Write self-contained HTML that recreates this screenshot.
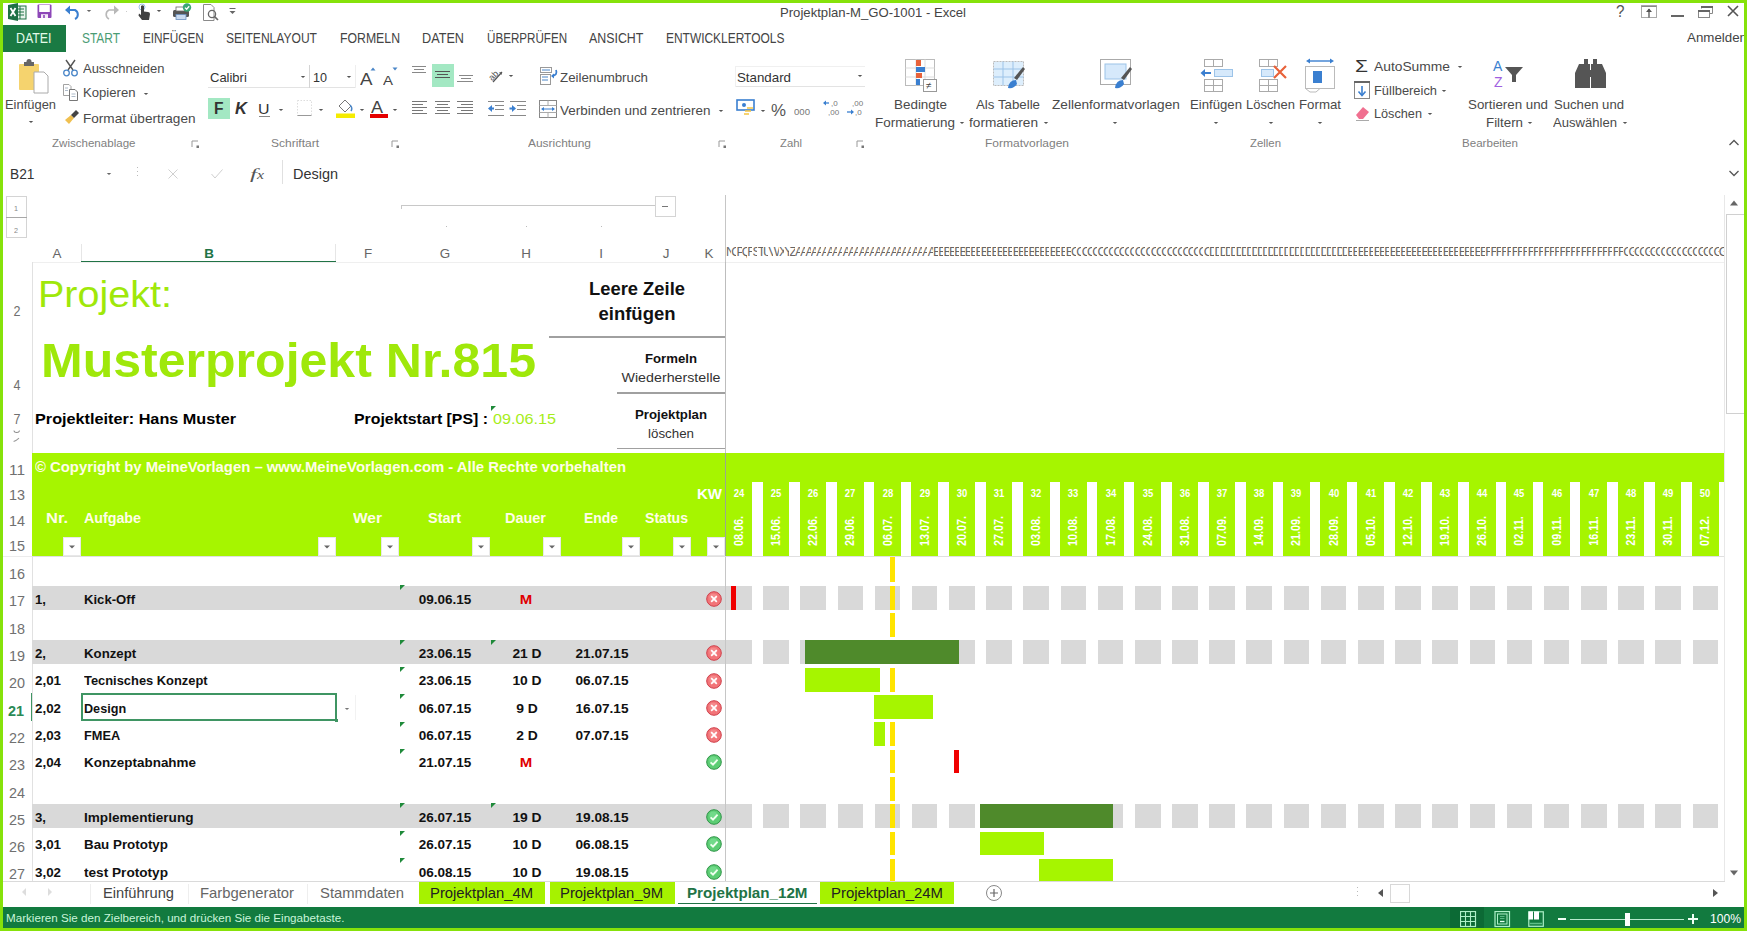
<!DOCTYPE html><html><head><meta charset="utf-8"><style>
html,body{margin:0;padding:0;}
body{width:1747px;height:931px;position:relative;overflow:hidden;background:#86e20a;font-family:"Liberation Sans",sans-serif;}
</style></head><body>
<div style="position:absolute;left:3px;top:3px;width:1741px;height:925px;background:#fff;"></div>
<svg style="position:absolute;left:7px;top:3px;" width="20" height="18" viewBox="0 0 20 18"><rect x="8" y="3" width="11" height="13" fill="#e8f3ec" stroke="#1e7145" stroke-width="1"/><path d="M10 6h7M10 9h7M10 12h7M13 3v13" stroke="#1e7145" stroke-width="1"/><path d="M1 2 L11 0 L11 18 L1 16 Z" fill="#1e7145"/><path d="M3.5 5 L8.5 13 M8.5 5 L3.5 13" stroke="#fff" stroke-width="1.8"/></svg>
<svg style="position:absolute;left:37px;top:4px;" width="15" height="15" viewBox="0 0 15 15"><rect x="0.5" y="0.5" width="14" height="13.5" rx="1" fill="#8d47b8"/><rect x="2.2" y="1" width="10.6" height="7" fill="#fff"/><rect x="4" y="10.2" width="7" height="3.8" fill="#f4ecf8"/><rect x="6.2" y="11" width="1.6" height="3" fill="#8d47b8"/></svg>
<svg style="position:absolute;left:64px;top:4px;" width="18" height="16" viewBox="0 0 18 16"><path d="M4 6 H11 A5 5 0 0 1 11 15" fill="none" stroke="#3a7fd0" stroke-width="2"/><path d="M1 6 L6 1.5 L6 10.5 Z" fill="#3a7fd0"/></svg>
<svg style="position:absolute;left:84.5px;top:8px;" width="8" height="6" viewBox="0 0 8 6"><path d="M1.7999999999999998 1.9 L6.2 1.9 L4 4.1 Z" fill="#666"/></svg>
<svg style="position:absolute;left:102px;top:4px;" width="18" height="16" viewBox="0 0 18 16"><path d="M14 6 H7 A5 5 0 0 0 7 15" fill="none" stroke="#b8b8b8" stroke-width="1.6"/><path d="M17 6 L12 1.5 L12 10.5 Z" fill="#b8b8b8"/></svg>
<div style="position:absolute;left:125.5px;top:10.5px;width:1.0px;height:1.0px;background:#ccc;"></div>
<svg style="position:absolute;left:136px;top:3px;" width="16" height="18" viewBox="0 0 16 18"><circle cx="6" cy="4" r="3" fill="none" stroke="#9ec2e8" stroke-width="1"/><path d="M5 3 V12 L3 10.5 L2.5 12.5 L6 17 H13 L14 11 Q14 9 12 9 L8 8.5 V3 Q6.5 1.5 5 3Z" fill="#404040"/></svg>
<svg style="position:absolute;left:154.5px;top:8px;" width="8" height="6" viewBox="0 0 8 6"><path d="M1.7999999999999998 1.9 L6.2 1.9 L4 4.1 Z" fill="#555"/></svg>
<svg style="position:absolute;left:172px;top:3px;" width="20" height="17" viewBox="0 0 20 17"><rect x="1" y="7" width="16" height="7" rx="1.5" fill="#555"/><rect x="4" y="4" width="9" height="4" fill="#fff" stroke="#666" stroke-width="0.8"/><rect x="4" y="11.5" width="10" height="5" fill="#c9daf0" stroke="#6a8fbf" stroke-width="0.8"/><circle cx="15" cy="4.5" r="4.2" fill="#3aa676"/><path d="M13 4.6 L14.6 6.2 L17.2 3.2" fill="none" stroke="#fff" stroke-width="1.3"/></svg>
<svg style="position:absolute;left:202px;top:2px;" width="18" height="19" viewBox="0 0 18 19"><path d="M1.5 2.5 H9 L12 5.5 V18.5 H1.5 Z" fill="#fff" stroke="#8a8a8a" stroke-width="1"/><circle cx="10" cy="12" r="3.6" fill="none" stroke="#666" stroke-width="1.3"/><path d="M12.6 14.6 L16 18" stroke="#666" stroke-width="1.6"/></svg>
<svg style="position:absolute;left:228px;top:7px;" width="9" height="9" viewBox="0 0 9 9"><rect x="1.5" y="1" width="6" height="1" fill="#666"/><path d="M1.5 4 H7.5 L4.5 7 Z" fill="#666"/></svg>
<span id="t1" style="position:absolute;left:780.00px;top:6.13px;font:400 13px/14.94px 'Liberation Sans', sans-serif;color:#444;white-space:nowrap;transform:scaleX(1.0095);transform-origin:left 0;">Projektplan-M_GO-1001 - Excel</span>
<span id="t2" style="position:absolute;left:1616.00px;top:2.00px;font:400 16.5px/18.96px 'Liberation Sans', sans-serif;color:#555;white-space:nowrap;transform:scaleX(0.9252);transform-origin:left 0;">?</span>
<svg style="position:absolute;left:1640px;top:4px;" width="20" height="16" viewBox="0 0 20 16"><rect x="1.5" y="1.5" width="15" height="12" fill="none" stroke="#aaa" stroke-width="1"/><path d="M1.5 2.5 H16.5" stroke="#888" stroke-width="1"/><path d="M9 5 V13.5" stroke="#555" stroke-width="1.3"/><path d="M6 8 L9 4.5 L12 8Z" fill="#555"/></svg>
<div style="position:absolute;left:1671px;top:14.5px;width:12.5px;height:2.0px;background:#666;"></div>
<svg style="position:absolute;left:1697px;top:3px;" width="18" height="16" viewBox="0 0 18 16"><rect x="1.5" y="7.5" width="11" height="7" fill="none" stroke="#888" stroke-width="1"/><rect x="1" y="7" width="12" height="2" fill="#666"/><path d="M4.5 5.5 V3.5 H15.5 V10.5 H13" fill="none" stroke="#888" stroke-width="1"/><rect x="4" y="3" width="12" height="2" fill="#666"/></svg>
<svg style="position:absolute;left:1726px;top:4px;" width="14" height="14" viewBox="0 0 14 14"><path d="M2 2 L12 12 M12 2 L2 12" stroke="#555" stroke-width="1.6"/></svg>
<span id="t3" style="position:absolute;left:1687.00px;top:31.11px;font:400 12.8px/14.71px 'Liberation Sans', sans-serif;color:#444;white-space:nowrap;transform:scaleX(1.0412);transform-origin:left 0;">Anmelden</span>
<div style="position:absolute;left:3px;top:25px;width:63.3px;height:26.5px;background:#1a7a43;"></div>
<span id="t4" style="position:absolute;left:15.50px;top:30.33px;font:400 14.3px/16.43px 'Liberation Sans', sans-serif;color:#e3fbe9;white-space:nowrap;transform:scaleX(0.8649);transform-origin:left 0;">DATEI</span>
<span id="t5" style="position:absolute;left:81.50px;top:30.33px;font:400 14.3px/16.43px 'Liberation Sans', sans-serif;color:#4a9c74;white-space:nowrap;transform:scaleX(0.8343);transform-origin:left 0;">START</span>
<span id="t6" style="position:absolute;left:142.70px;top:30.33px;font:400 14.3px/16.43px 'Liberation Sans', sans-serif;color:#444;white-space:nowrap;transform:scaleX(0.8230);transform-origin:left 0;">EINFÜGEN</span>
<span id="t7" style="position:absolute;left:226.00px;top:30.33px;font:400 14.3px/16.43px 'Liberation Sans', sans-serif;color:#444;white-space:nowrap;transform:scaleX(0.8443);transform-origin:left 0;">SEITENLAYOUT</span>
<span id="t8" style="position:absolute;left:340.00px;top:30.33px;font:400 14.3px/16.43px 'Liberation Sans', sans-serif;color:#444;white-space:nowrap;transform:scaleX(0.8583);transform-origin:left 0;">FORMELN</span>
<span id="t9" style="position:absolute;left:422.00px;top:30.33px;font:400 14.3px/16.43px 'Liberation Sans', sans-serif;color:#444;white-space:nowrap;transform:scaleX(0.8860);transform-origin:left 0;">DATEN</span>
<span id="t10" style="position:absolute;left:486.70px;top:30.33px;font:400 14.3px/16.43px 'Liberation Sans', sans-serif;color:#444;white-space:nowrap;transform:scaleX(0.8131);transform-origin:left 0;">ÜBERPRÜFEN</span>
<span id="t11" style="position:absolute;left:589.20px;top:30.33px;font:400 14.3px/16.43px 'Liberation Sans', sans-serif;color:#444;white-space:nowrap;transform:scaleX(0.8667);transform-origin:left 0;">ANSICHT</span>
<span id="t12" style="position:absolute;left:666.30px;top:30.33px;font:400 14.3px/16.43px 'Liberation Sans', sans-serif;color:#444;white-space:nowrap;transform:scaleX(0.8356);transform-origin:left 0;">ENTWICKLERTOOLS</span>
<svg style="position:absolute;left:17px;top:58px;" width="34" height="37" viewBox="0 0 34 37"><rect x="2" y="6" width="20" height="26" rx="1" fill="#f5d36e"/><path d="M7 4 H17 V8 H7 Z" fill="#666"/><circle cx="12" cy="3.5" r="2.5" fill="#666"/><path d="M17 14 H27 L31 18 V35 H17 Z" fill="#fff" stroke="#aaa" stroke-width="1"/></svg>
<span id="t13" style="position:absolute;left:5.40px;top:98.20px;font:400 12.6px/14.48px 'Liberation Sans', sans-serif;color:#4a4a4a;white-space:nowrap;transform:scaleX(1.0258);transform-origin:left 0;">Einfügen</span>
<svg style="position:absolute;left:27px;top:119px;" width="8" height="6" viewBox="0 0 8 6"><path d="M1.7999999999999998 1.9 L6.2 1.9 L4 4.1 Z" fill="#555"/></svg>
<svg style="position:absolute;left:62px;top:59px;" width="17" height="18" viewBox="0 0 17 18"><path d="M4 1 L11 11 M13 1 L6 11" stroke="#555" stroke-width="1.4"/><circle cx="4.5" cy="14" r="2.8" fill="none" stroke="#4a86c8" stroke-width="1.3"/><circle cx="12.5" cy="14" r="2.8" fill="none" stroke="#4a86c8" stroke-width="1.3"/></svg>
<span id="t14" style="position:absolute;left:82.60px;top:61.73px;font:400 13px/14.94px 'Liberation Sans', sans-serif;color:#4a4a4a;white-space:nowrap;transform:scaleX(0.9979);transform-origin:left 0;">Ausschneiden</span>
<svg style="position:absolute;left:62px;top:83px;" width="17" height="19" viewBox="0 0 17 19"><path d="M1.5 1.5 H7 L9 3.5 V12.5 H1.5 Z" fill="#fff" stroke="#999" stroke-width="0.9"/><path d="M7.5 6.5 H13 L15.5 9 V17.5 H7.5 Z" fill="#fff" stroke="#777" stroke-width="1"/><path d="M9.5 11h4M9.5 13.5h4M3 5h3M3 7.5h3" stroke="#9ab" stroke-width="0.8"/></svg>
<span id="t15" style="position:absolute;left:82.60px;top:86.43px;font:400 13px/14.94px 'Liberation Sans', sans-serif;color:#4a4a4a;white-space:nowrap;transform:scaleX(1.0087);transform-origin:left 0;">Kopieren</span>
<svg style="position:absolute;left:141.5px;top:90.5px;" width="8" height="6" viewBox="0 0 8 6"><path d="M1.7999999999999998 1.9 L6.2 1.9 L4 4.1 Z" fill="#555"/></svg>
<svg style="position:absolute;left:63px;top:108px;" width="17" height="18" viewBox="0 0 17 18"><path d="M2 12 L8 7 L11 10 L6 16 Z" fill="#f0c050"/><path d="M8 7 L13 2 L16 5 L11 10 Z" fill="#444"/></svg>
<span id="t16" style="position:absolute;left:82.60px;top:111.63px;font:400 13px/14.94px 'Liberation Sans', sans-serif;color:#4a4a4a;white-space:nowrap;transform:scaleX(1.0448);transform-origin:left 0;">Format übertragen</span>
<span id="t17" style="position:absolute;left:51.50px;top:138.21px;font:400 10.3px/11.83px 'Liberation Sans', sans-serif;color:#808080;white-space:nowrap;transform:scaleX(1.1220);transform-origin:left 0;">Zwischenablage</span>
<svg style="position:absolute;left:190.5px;top:139.5px;" width="9" height="9" viewBox="0 0 9 9"><path d="M1 7 V1 H7" fill="none" stroke="#999" stroke-width="1"/><rect x="5.5" y="5.5" width="2.5" height="2.5" fill="#777"/></svg>
<div style="position:absolute;left:208px;top:86.5px;width:147.5px;height:1.0px;background:#e3e3e3;"></div>
<div style="position:absolute;left:308.7px;top:65px;width:1.0px;height:22.5px;background:#d4d4d4;"></div>
<div style="position:absolute;left:354.5px;top:65px;width:1.0px;height:22.5px;background:#eeeeee;"></div>
<span id="t18" style="position:absolute;left:209.60px;top:70.93px;font:400 13px/14.94px 'Liberation Sans', sans-serif;color:#333;white-space:nowrap;transform:scaleX(0.9988);transform-origin:left 0;">Calibri</span>
<svg style="position:absolute;left:299px;top:73.5px;" width="8" height="6" viewBox="0 0 8 6"><path d="M1.7999999999999998 1.9 L6.2 1.9 L4 4.1 Z" fill="#555"/></svg>
<span id="t19" style="position:absolute;left:313.00px;top:70.93px;font:400 13px/14.94px 'Liberation Sans', sans-serif;color:#333;white-space:nowrap;transform:scaleX(0.9676);transform-origin:left 0;">10</span>
<svg style="position:absolute;left:345px;top:73.5px;" width="8" height="6" viewBox="0 0 8 6"><path d="M1.7999999999999998 1.9 L6.2 1.9 L4 4.1 Z" fill="#555"/></svg>
<span id="t20" style="position:absolute;left:359.50px;top:69.90px;font:400 16.5px/18.96px 'Liberation Sans', sans-serif;color:#444;white-space:nowrap;transform:scaleX(1.1348);transform-origin:left 0;">A</span>
<svg style="position:absolute;left:370px;top:67px;" width="6" height="4" viewBox="0 0 6 4"><path d="M0.5 3.5 L3 0.5 L5.5 3.5Z" fill="#4a86c8"/></svg>
<span id="t21" style="position:absolute;left:382.50px;top:72.67px;font:400 13.5px/15.51px 'Liberation Sans', sans-serif;color:#444;white-space:nowrap;transform:scaleX(1.1092);transform-origin:left 0;">A</span>
<svg style="position:absolute;left:392px;top:67px;" width="6" height="4" viewBox="0 0 6 4"><path d="M0.5 0.5 L3 3.5 L5.5 0.5Z" fill="#4a86c8"/></svg>
<div style="position:absolute;left:208px;top:97.8px;width:22px;height:21.7px;background:#a3e8c3;"></div>
<span id="t22" style="position:absolute;left:213.50px;top:99.96px;font:700 16px/18.38px 'Liberation Sans', sans-serif;color:#333;white-space:nowrap;transform:scaleX(0.9712);transform-origin:left 0;">F</span>
<span id="t23" style="position:absolute;left:235.00px;top:99.96px;font:700 16px/18.38px 'Liberation Sans', sans-serif;color:#333;white-space:nowrap;transform:scaleX(1.0378);transform-origin:left 0;font-style:italic;">K</span>
<span id="t24" style="position:absolute;left:258.00px;top:100.42px;font:400 15.5px/17.81px 'Liberation Sans', sans-serif;color:#333;white-space:nowrap;transform:scaleX(1.0265);transform-origin:left 0;">U</span>
<div style="position:absolute;left:259px;top:115.5px;width:11px;height:1.0px;background:#888;"></div>
<svg style="position:absolute;left:277px;top:106.5px;" width="8" height="6" viewBox="0 0 8 6"><path d="M1.7999999999999998 1.9 L6.2 1.9 L4 4.1 Z" fill="#555"/></svg>
<svg style="position:absolute;left:296px;top:99px;" width="17" height="18" viewBox="0 0 17 18"><path d="M1.5 1.5 H15.5 V16.5 H1.5 Z" fill="none" stroke="#ddd" stroke-width="1" stroke-dasharray="1.5 1.5"/><path d="M1.5 16.5 H15.5" stroke="#999" stroke-width="1"/></svg>
<svg style="position:absolute;left:317px;top:106.5px;" width="8" height="6" viewBox="0 0 8 6"><path d="M1.7999999999999998 1.9 L6.2 1.9 L4 4.1 Z" fill="#555"/></svg>
<svg style="position:absolute;left:335px;top:98px;" width="22" height="21" viewBox="0 0 22 21"><path d="M4 8 L10 2 L16 8 L10 14 Z" fill="#fff" stroke="#777" stroke-width="1"/><path d="M15 7 Q18 10 16 13" fill="none" stroke="#4a86c8" stroke-width="1.5"/><rect x="1" y="15.5" width="19" height="4.5" fill="#f5ec00"/></svg>
<svg style="position:absolute;left:358px;top:106.5px;" width="8" height="6" viewBox="0 0 8 6"><path d="M1.7999999999999998 1.9 L6.2 1.9 L4 4.1 Z" fill="#555"/></svg>
<span id="t25" style="position:absolute;left:371.00px;top:98.20px;font:400 16.5px/18.96px 'Liberation Sans', sans-serif;color:#444;white-space:nowrap;transform:scaleX(1.0894);transform-origin:left 0;">A</span>
<div style="position:absolute;left:370px;top:113.5px;width:18px;height:4.5px;background:#e50000;"></div>
<svg style="position:absolute;left:391px;top:106.5px;" width="8" height="6" viewBox="0 0 8 6"><path d="M1.7999999999999998 1.9 L6.2 1.9 L4 4.1 Z" fill="#555"/></svg>
<span id="t26" style="position:absolute;left:271.00px;top:138.21px;font:400 10.3px/11.83px 'Liberation Sans', sans-serif;color:#808080;white-space:nowrap;transform:scaleX(1.1650);transform-origin:left 0;">Schriftart</span>
<svg style="position:absolute;left:391px;top:139.5px;" width="9" height="9" viewBox="0 0 9 9"><path d="M1 7 V1 H7" fill="none" stroke="#999" stroke-width="1"/><rect x="5.5" y="5.5" width="2.5" height="2.5" fill="#777"/></svg>
<svg style="position:absolute;left:412px;top:66px;" width="15" height="8" viewBox="0 0 15 8"><rect x="0" y="0" width="14" height="1" fill="#888"/><rect x="2" y="3" width="10" height="1" fill="#888"/><rect x="0" y="6" width="14" height="1" fill="#888"/></svg>
<div style="position:absolute;left:431.5px;top:64.2px;width:22.0px;height:22.5px;background:#a3e8c3;"></div>
<svg style="position:absolute;left:435px;top:71px;" width="16" height="8" viewBox="0 0 16 8"><rect x="0" y="0" width="15" height="1" fill="#555"/><rect x="2" y="3" width="11" height="1" fill="#555"/><rect x="0" y="6" width="15" height="1" fill="#555"/></svg>
<svg style="position:absolute;left:457px;top:75px;" width="17" height="8" viewBox="0 0 17 8"><rect x="2" y="0" width="14" height="1" fill="#888"/><rect x="4" y="3" width="10" height="1" fill="#888"/><rect x="0" y="6" width="16" height="1" fill="#888"/></svg>
<svg style="position:absolute;left:487px;top:66px;" width="18" height="18" viewBox="0 0 18 18"><text x="1" y="12" font-family="Liberation Sans" font-size="9" fill="#555" transform="rotate(-45 7 9)">ab</text><path d="M6 16 L15 6" stroke="#555" stroke-width="1.2"/><path d="M15 6 L12 6.5 L14.5 9Z" fill="#555"/></svg>
<svg style="position:absolute;left:506.5px;top:73px;" width="8" height="6" viewBox="0 0 8 6"><path d="M1.7999999999999998 1.9 L6.2 1.9 L4 4.1 Z" fill="#555"/></svg>
<svg style="position:absolute;left:539px;top:66px;" width="20" height="20" viewBox="0 0 20 20"><rect x="1.5" y="1.5" width="11" height="5" fill="none" stroke="#999" stroke-width="1"/><rect x="1.5" y="8.5" width="10" height="10" fill="none" stroke="#999" stroke-width="1"/><path d="M3 4h8M3 11h6M3 14h6" stroke="#4a86c8" stroke-width="1"/><path d="M17 4 Q19 9 13 10" fill="none" stroke="#3a7fd0" stroke-width="1.8"/><path d="M12 10 L15 7.5 L15 12.5Z" fill="#3a7fd0"/></svg>
<span id="t27" style="position:absolute;left:560.00px;top:70.93px;font:400 13px/14.94px 'Liberation Sans', sans-serif;color:#4a4a4a;white-space:nowrap;transform:scaleX(1.0233);transform-origin:left 0;">Zeilenumbruch</span>
<svg style="position:absolute;left:412px;top:101px;" width="16" height="14" viewBox="0 0 16 14"><rect x="0" y="0" width="15" height="1" fill="#777"/><rect x="0" y="3" width="11" height="1" fill="#777"/><rect x="0" y="6" width="15" height="1" fill="#777"/><rect x="0" y="9" width="11" height="1" fill="#777"/><rect x="0" y="12" width="15" height="1" fill="#777"/></svg>
<svg style="position:absolute;left:435px;top:101px;" width="16" height="14" viewBox="0 0 16 14"><rect x="0" y="0" width="15" height="1" fill="#777"/><rect x="2" y="3" width="11" height="1" fill="#777"/><rect x="0" y="6" width="15" height="1" fill="#777"/><rect x="2" y="9" width="11" height="1" fill="#777"/><rect x="0" y="12" width="15" height="1" fill="#777"/></svg>
<svg style="position:absolute;left:457px;top:101px;" width="17" height="14" viewBox="0 0 17 14"><rect x="0" y="0" width="16" height="1" fill="#777"/><rect x="4" y="3" width="12" height="1" fill="#777"/><rect x="0" y="6" width="16" height="1" fill="#777"/><rect x="4" y="9" width="12" height="1" fill="#777"/><rect x="0" y="12" width="16" height="1" fill="#777"/></svg>
<svg style="position:absolute;left:487px;top:100px;" width="18" height="17" viewBox="0 0 18 17"><path d="M1 1.5h16M8 5.5h9M8 9.5h9M1 15.5h16" stroke="#888" stroke-width="1"/><path d="M1 8.5 L5 5 V12Z" fill="#3a7fd0"/><rect x="4" y="7.5" width="3" height="2" fill="#3a7fd0"/></svg>
<svg style="position:absolute;left:509px;top:100px;" width="18" height="17" viewBox="0 0 18 17"><path d="M1 1.5h16M8 5.5h9M8 9.5h9M1 15.5h16" stroke="#888" stroke-width="1"/><path d="M7 8.5 L3 5 V12Z" fill="#3a7fd0"/><rect x="0.5" y="7.5" width="3" height="2" fill="#3a7fd0"/></svg>
<svg style="position:absolute;left:538px;top:99px;" width="20" height="20" viewBox="0 0 20 20"><rect x="1.5" y="1.5" width="17" height="17" fill="none" stroke="#888" stroke-width="1"/><path d="M1.5 6.5h17M1.5 13.5h17M10 1.5v5M10 13.5v5" stroke="#aaa" stroke-width="1"/><path d="M4 10 H16" stroke="#3a7fd0" stroke-width="1"/><path d="M3 10 L6 8 V12Z M17 10 L14 8 V12Z" fill="#3a7fd0"/></svg>
<span id="t28" style="position:absolute;left:560.00px;top:104.43px;font:400 13px/14.94px 'Liberation Sans', sans-serif;color:#4a4a4a;white-space:nowrap;transform:scaleX(1.0366);transform-origin:left 0;">Verbinden und zentrieren</span>
<svg style="position:absolute;left:717px;top:107.5px;" width="8" height="6" viewBox="0 0 8 6"><path d="M1.7999999999999998 1.9 L6.2 1.9 L4 4.1 Z" fill="#555"/></svg>
<span id="t29" style="position:absolute;left:528.00px;top:138.21px;font:400 10.3px/11.83px 'Liberation Sans', sans-serif;color:#808080;white-space:nowrap;transform:scaleX(1.1583);transform-origin:left 0;">Ausrichtung</span>
<svg style="position:absolute;left:718px;top:139.5px;" width="9" height="9" viewBox="0 0 9 9"><path d="M1 7 V1 H7" fill="none" stroke="#999" stroke-width="1"/><rect x="5.5" y="5.5" width="2.5" height="2.5" fill="#777"/></svg>
<div style="position:absolute;left:734.6px;top:66px;width:130.6px;height:1px;background:#f0f0f0;"></div>
<div style="position:absolute;left:734.6px;top:86.2px;width:130.6px;height:1.0px;background:#e3e3e3;"></div>
<div style="position:absolute;left:734.6px;top:66px;width:1.0px;height:21.2px;background:#f0f0f0;"></div>
<span id="t30" style="position:absolute;left:737.00px;top:70.93px;font:400 13px/14.94px 'Liberation Sans', sans-serif;color:#333;white-space:nowrap;transform:scaleX(1.0234);transform-origin:left 0;">Standard</span>
<svg style="position:absolute;left:856px;top:73px;" width="8" height="6" viewBox="0 0 8 6"><path d="M1.7999999999999998 1.9 L6.2 1.9 L4 4.1 Z" fill="#555"/></svg>
<svg style="position:absolute;left:736px;top:99px;" width="20" height="19" viewBox="0 0 20 19"><rect x="1" y="1" width="17" height="10" fill="#fff" stroke="#3a7fd0" stroke-width="1.6"/><circle cx="8" cy="6" r="2" fill="#3a7fd0"/><path d="M11 9h6M9 12h6M8 15h5" stroke="#f5c542" stroke-width="1.5"/></svg>
<svg style="position:absolute;left:758.5px;top:107.5px;" width="8" height="6" viewBox="0 0 8 6"><path d="M1.7999999999999998 1.9 L6.2 1.9 L4 4.1 Z" fill="#555"/></svg>
<span id="t31" style="position:absolute;left:770.50px;top:102.16px;font:400 16px/18.38px 'Liberation Sans', sans-serif;color:#555;white-space:nowrap;transform:scaleX(1.0538);transform-origin:left 0;">%</span>
<span id="t32" style="position:absolute;left:794.00px;top:106.65px;font:400 9.5px/10.92px 'Liberation Sans', sans-serif;color:#777;white-space:nowrap;transform:scaleX(1.0089);transform-origin:left 0;">000</span>
<svg style="position:absolute;left:822px;top:98px;" width="20" height="20" viewBox="0 0 20 20"><text x="9" y="8" font-family="Liberation Sans" font-size="8" fill="#777">,0</text><text x="6" y="17" font-family="Liberation Sans" font-size="8" fill="#777">,00</text><path d="M2 5 H7" stroke="#3a7fd0" stroke-width="1.3"/><path d="M1 5 L4 2.5 V7.5Z" fill="#3a7fd0"/></svg>
<svg style="position:absolute;left:845px;top:98px;" width="20" height="20" viewBox="0 0 20 20"><text x="7" y="8" font-family="Liberation Sans" font-size="8" fill="#777">,00</text><text x="10" y="17" font-family="Liberation Sans" font-size="8" fill="#777">,0</text><path d="M2 14 H8" stroke="#3a7fd0" stroke-width="1.3"/><path d="M9 14 L6 11.5 V16.5Z" fill="#3a7fd0"/></svg>
<span id="t33" style="position:absolute;left:780.00px;top:138.21px;font:400 10.3px/11.83px 'Liberation Sans', sans-serif;color:#808080;white-space:nowrap;transform:scaleX(1.0983);transform-origin:left 0;">Zahl</span>
<svg style="position:absolute;left:856px;top:139.5px;" width="9" height="9" viewBox="0 0 9 9"><path d="M1 7 V1 H7" fill="none" stroke="#999" stroke-width="1"/><rect x="5.5" y="5.5" width="2.5" height="2.5" fill="#777"/></svg>
<svg style="position:absolute;left:904px;top:58px;" width="36" height="36" viewBox="0 0 36 36"><rect x="1.5" y="1.5" width="29" height="26" fill="#fff" stroke="#bbb" stroke-width="1"/><path d="M1.5 10h29M1.5 19h29M12 1.5v26M21 1.5v26" stroke="#ddd" stroke-width="1"/><rect x="12" y="2" width="5" height="6" fill="#e8623a"/><rect x="12" y="9" width="9" height="5" fill="#3a7fd0"/><rect x="12" y="15" width="6" height="5" fill="#e8623a"/><rect x="12" y="21" width="4" height="6" fill="#3a7fd0"/><rect x="19.5" y="21.5" width="13" height="12" fill="#fff" stroke="#999" stroke-width="1"/><text x="22" y="31" font-family="Liberation Sans" font-size="10" fill="#444">≠</text></svg>
<span id="t34" style="position:absolute;left:894.00px;top:97.73px;font:400 13px/14.94px 'Liberation Sans', sans-serif;color:#4a4a4a;white-space:nowrap;transform:scaleX(1.0326);transform-origin:left 0;">Bedingte</span>
<span id="t35" style="position:absolute;left:875.00px;top:116.13px;font:400 13px/14.94px 'Liberation Sans', sans-serif;color:#4a4a4a;white-space:nowrap;transform:scaleX(1.0348);transform-origin:left 0;">Formatierung</span>
<svg style="position:absolute;left:957.5px;top:119.5px;" width="8" height="6" viewBox="0 0 8 6"><path d="M1.7999999999999998 1.9 L6.2 1.9 L4 4.1 Z" fill="#555"/></svg>
<svg style="position:absolute;left:992px;top:58px;" width="36" height="36" viewBox="0 0 36 36"><rect x="1.5" y="3.5" width="30" height="24" fill="#ddeefc" stroke="#bbb" stroke-width="1" stroke-dasharray="2 1"/><path d="M1.5 11h30M1.5 19h30M11 3.5v24M21 3.5v24" stroke="#9cc3e8" stroke-width="1"/><path d="M22 20 L31 9 L33 11 L25 22Z" fill="#555"/><path d="M16 30 Q17 22 24 22 L25 26 Q22 31 16 30Z" fill="#3a7fd0"/></svg>
<span id="t36" style="position:absolute;left:976.00px;top:97.73px;font:400 13px/14.94px 'Liberation Sans', sans-serif;color:#4a4a4a;white-space:nowrap;transform:scaleX(1.0217);transform-origin:left 0;">Als Tabelle</span>
<span id="t37" style="position:absolute;left:969.00px;top:116.13px;font:400 13px/14.94px 'Liberation Sans', sans-serif;color:#4a4a4a;white-space:nowrap;transform:scaleX(1.0494);transform-origin:left 0;">formatieren</span>
<svg style="position:absolute;left:1041.5px;top:119.5px;" width="8" height="6" viewBox="0 0 8 6"><path d="M1.7999999999999998 1.9 L6.2 1.9 L4 4.1 Z" fill="#555"/></svg>
<svg style="position:absolute;left:1099px;top:58px;" width="36" height="36" viewBox="0 0 36 36"><rect x="1.5" y="1.5" width="30" height="25" fill="#fff" stroke="#aaa" stroke-width="1"/><rect x="6" y="6" width="21" height="15" fill="#d6e9fb" stroke="#9cc3e8" stroke-width="1"/><path d="M22 20 L31 9 L33 11 L25 22Z" fill="#555"/><path d="M16 30 Q17 22 24 22 L25 26 Q22 31 16 30Z" fill="#3a7fd0"/></svg>
<span id="t38" style="position:absolute;left:1051.60px;top:97.73px;font:400 13px/14.94px 'Liberation Sans', sans-serif;color:#4a4a4a;white-space:nowrap;transform:scaleX(1.0465);transform-origin:left 0;">Zellenformatvorlagen</span>
<svg style="position:absolute;left:1111px;top:119.5px;" width="8" height="6" viewBox="0 0 8 6"><path d="M1.7999999999999998 1.9 L6.2 1.9 L4 4.1 Z" fill="#555"/></svg>
<span id="t39" style="position:absolute;left:985.00px;top:138.21px;font:400 10.3px/11.83px 'Liberation Sans', sans-serif;color:#808080;white-space:nowrap;transform:scaleX(1.1649);transform-origin:left 0;">Formatvorlagen</span>
<svg style="position:absolute;left:1200px;top:58px;" width="36" height="36" viewBox="0 0 36 36"><rect x="4.5" y="1.5" width="18" height="7" fill="none" stroke="#aaa" stroke-width="1"/><rect x="4.5" y="21.5" width="18" height="12" fill="none" stroke="#aaa" stroke-width="1"/><path d="M13.5 1.5v7M4.5 27.5h18M13.5 21.5v12" stroke="#aaa" stroke-width="1"/><rect x="14.5" y="11.5" width="18" height="7" fill="#d6e9fb" stroke="#9cc3e8" stroke-width="1"/><path d="M2 15 H11" stroke="#3a7fd0" stroke-width="2"/><path d="M0.5 15 L5 11 V19Z" fill="#3a7fd0"/></svg>
<span id="t40" style="position:absolute;left:1190.00px;top:97.73px;font:400 13px/14.94px 'Liberation Sans', sans-serif;color:#4a4a4a;white-space:nowrap;transform:scaleX(1.0131);transform-origin:left 0;">Einfügen</span>
<svg style="position:absolute;left:1212px;top:119.5px;" width="8" height="6" viewBox="0 0 8 6"><path d="M1.7999999999999998 1.9 L6.2 1.9 L4 4.1 Z" fill="#555"/></svg>
<svg style="position:absolute;left:1255px;top:58px;" width="36" height="36" viewBox="0 0 36 36"><rect x="4.5" y="1.5" width="18" height="7" fill="none" stroke="#aaa" stroke-width="1"/><rect x="4.5" y="21.5" width="18" height="12" fill="none" stroke="#aaa" stroke-width="1"/><path d="M13.5 1.5v7M4.5 27.5h18M13.5 21.5v12" stroke="#aaa" stroke-width="1"/><rect x="6.5" y="11.5" width="12" height="7" fill="#d6e9fb" stroke="#9cc3e8" stroke-width="1"/><path d="M19 8 L31 20 M31 8 L19 20" stroke="#e8623a" stroke-width="2.2"/></svg>
<span id="t41" style="position:absolute;left:1246.00px;top:97.73px;font:400 13px/14.94px 'Liberation Sans', sans-serif;color:#4a4a4a;white-space:nowrap;transform:scaleX(0.9968);transform-origin:left 0;">Löschen</span>
<svg style="position:absolute;left:1267px;top:119.5px;" width="8" height="6" viewBox="0 0 8 6"><path d="M1.7999999999999998 1.9 L6.2 1.9 L4 4.1 Z" fill="#555"/></svg>
<svg style="position:absolute;left:1304px;top:58px;" width="36" height="36" viewBox="0 0 36 36"><path d="M4 3 H28" stroke="#3a7fd0" stroke-width="1.4"/><path d="M2 3 L6 0.5 V5.5Z M30 3 L26 0.5 V5.5Z" fill="#3a7fd0"/><rect x="1.5" y="8.5" width="29" height="22" fill="#fff" stroke="#bbb" stroke-width="1"/><rect x="9" y="13" width="9" height="12" fill="#3a7fd0"/><path d="M1.5 30.5 L6 34 H12 L16 30.5" fill="none" stroke="#bbb" stroke-width="1"/></svg>
<span id="t42" style="position:absolute;left:1299.00px;top:97.73px;font:400 13px/14.94px 'Liberation Sans', sans-serif;color:#4a4a4a;white-space:nowrap;transform:scaleX(1.0201);transform-origin:left 0;">Format</span>
<svg style="position:absolute;left:1316px;top:119.5px;" width="8" height="6" viewBox="0 0 8 6"><path d="M1.7999999999999998 1.9 L6.2 1.9 L4 4.1 Z" fill="#555"/></svg>
<span id="t43" style="position:absolute;left:1250.00px;top:138.21px;font:400 10.3px/11.83px 'Liberation Sans', sans-serif;color:#808080;white-space:nowrap;transform:scaleX(1.1053);transform-origin:left 0;">Zellen</span>
<span id="t44" style="position:absolute;left:1354.50px;top:58.16px;font:400 16px/18.38px 'Liberation Sans', sans-serif;color:#333;white-space:nowrap;transform:scaleX(1.3144);transform-origin:left 0;">Σ</span>
<span id="t45" style="position:absolute;left:1374.00px;top:60.43px;font:400 13px/14.94px 'Liberation Sans', sans-serif;color:#4a4a4a;white-space:nowrap;transform:scaleX(1.0622);transform-origin:left 0;">AutoSumme</span>
<svg style="position:absolute;left:1456px;top:64px;" width="8" height="6" viewBox="0 0 8 6"><path d="M1.7999999999999998 1.9 L6.2 1.9 L4 4.1 Z" fill="#555"/></svg>
<svg style="position:absolute;left:1353px;top:80px;" width="18" height="20" viewBox="0 0 18 20"><rect x="1.5" y="2.5" width="15" height="16" fill="#fff" stroke="#888" stroke-width="1"/><rect x="1" y="1" width="16" height="2" fill="#666"/><path d="M9 6 V15" stroke="#3a7fd0" stroke-width="1.6"/><path d="M5.5 11.5 L9 15.5 L12.5 11.5" fill="none" stroke="#3a7fd0" stroke-width="1.6"/></svg>
<span id="t46" style="position:absolute;left:1374.00px;top:83.73px;font:400 13px/14.94px 'Liberation Sans', sans-serif;color:#4a4a4a;white-space:nowrap;transform:scaleX(0.9907);transform-origin:left 0;">Füllbereich</span>
<svg style="position:absolute;left:1440px;top:87.5px;" width="8" height="6" viewBox="0 0 8 6"><path d="M1.7999999999999998 1.9 L6.2 1.9 L4 4.1 Z" fill="#555"/></svg>
<svg style="position:absolute;left:1354px;top:104px;" width="18" height="18" viewBox="0 0 18 18"><path d="M2 11 L9 3 L15 8 L9 15 H5 Z" fill="#f07090"/><path d="M2 16.5 H15" stroke="#aaa" stroke-width="1"/></svg>
<span id="t47" style="position:absolute;left:1374.00px;top:107.23px;font:400 13px/14.94px 'Liberation Sans', sans-serif;color:#4a4a4a;white-space:nowrap;transform:scaleX(0.9765);transform-origin:left 0;">Löschen</span>
<svg style="position:absolute;left:1425.5px;top:111px;" width="8" height="6" viewBox="0 0 8 6"><path d="M1.7999999999999998 1.9 L6.2 1.9 L4 4.1 Z" fill="#555"/></svg>
<svg style="position:absolute;left:1492px;top:58px;" width="34" height="34" viewBox="0 0 34 34"><text x="1" y="13" font-family="Liberation Sans" font-size="14" fill="#3a7fd0">A</text><text x="2" y="29" font-family="Liberation Sans" font-size="14" fill="#a060e0">Z</text><path d="M13 9 H31 L24 17 V24 H20 V17Z" fill="#555"/></svg>
<span id="t48" style="position:absolute;left:1468.00px;top:97.73px;font:400 13px/14.94px 'Liberation Sans', sans-serif;color:#4a4a4a;white-space:nowrap;transform:scaleX(1.0248);transform-origin:left 0;">Sortieren und</span>
<span id="t49" style="position:absolute;left:1486.00px;top:116.13px;font:400 13px/14.94px 'Liberation Sans', sans-serif;color:#4a4a4a;white-space:nowrap;transform:scaleX(1.0242);transform-origin:left 0;">Filtern</span>
<svg style="position:absolute;left:1525.5px;top:119.5px;" width="8" height="6" viewBox="0 0 8 6"><path d="M1.7999999999999998 1.9 L6.2 1.9 L4 4.1 Z" fill="#555"/></svg>
<svg style="position:absolute;left:1573px;top:58px;" width="35" height="33" viewBox="0 0 35 33"><path d="M11 1 H15 V6 H17 V30 H2 V15 L6 6 H11Z M24 1 H20 V6 H18 V30 H33 V15 L29 6 H24Z" fill="#555"/><rect x="14" y="12" width="7" height="7" fill="#555"/></svg>
<span id="t50" style="position:absolute;left:1554.00px;top:97.73px;font:400 13px/14.94px 'Liberation Sans', sans-serif;color:#4a4a4a;white-space:nowrap;transform:scaleX(1.0086);transform-origin:left 0;">Suchen und</span>
<span id="t51" style="position:absolute;left:1553.00px;top:116.13px;font:400 13px/14.94px 'Liberation Sans', sans-serif;color:#4a4a4a;white-space:nowrap;transform:scaleX(1.0061);transform-origin:left 0;">Auswählen</span>
<svg style="position:absolute;left:1620.5px;top:119.5px;" width="8" height="6" viewBox="0 0 8 6"><path d="M1.7999999999999998 1.9 L6.2 1.9 L4 4.1 Z" fill="#555"/></svg>
<span id="t52" style="position:absolute;left:1462.00px;top:138.21px;font:400 10.3px/11.83px 'Liberation Sans', sans-serif;color:#808080;white-space:nowrap;transform:scaleX(1.1242);transform-origin:left 0;">Bearbeiten</span>
<svg style="position:absolute;left:1728px;top:138px;" width="12" height="9" viewBox="0 0 12 9"><path d="M1.5 7 L6 2.5 L10.5 7" fill="none" stroke="#555" stroke-width="1.3"/></svg>
<span id="t53" style="position:absolute;left:10.00px;top:167.19px;font:400 13.8px/15.86px 'Liberation Sans', sans-serif;color:#333;white-space:nowrap;transform:scaleX(0.9975);transform-origin:left 0;">B21</span>
<svg style="position:absolute;left:105px;top:171px;" width="8" height="6" viewBox="0 0 8 6"><path d="M1.7999999999999998 1.9 L6.2 1.9 L4 4.1 Z" fill="#666"/></svg>
<svg style="position:absolute;left:136px;top:166px;" width="4" height="14" viewBox="0 0 4 14"><rect x="1" y="1" width="1" height="1" fill="#bbb"/><rect x="1" y="5" width="1" height="1" fill="#bbb"/><rect x="1" y="9" width="1" height="1" fill="#bbb"/></svg>
<svg style="position:absolute;left:167px;top:168px;" width="12" height="12" viewBox="0 0 12 12"><path d="M1.5 1.5 L10.5 10.5 M10.5 1.5 L1.5 10.5" stroke="#d0d0d0" stroke-width="1"/></svg>
<svg style="position:absolute;left:210px;top:168px;" width="14" height="12" viewBox="0 0 14 12"><path d="M1.5 6 L5 10 L12.5 1.5" fill="none" stroke="#d0d0d0" stroke-width="1"/></svg>
<span id="t54" style="position:absolute;left:250.00px;top:166.09px;font:400 15px/17.23px 'Liberation Serif', serif;color:#555;white-space:nowrap;transform:scaleX(1.6779);transform-origin:left 0;font-style:italic;">f</span>
<span id="t55" style="position:absolute;left:257.00px;top:168.85px;font:400 12px/13.79px 'Liberation Serif', serif;color:#555;white-space:nowrap;transform:scaleX(1.3138);transform-origin:left 0;font-style:italic;">x</span>
<div style="position:absolute;left:281.5px;top:160px;width:1.0px;height:24px;background:#e0e0e0;"></div>
<span id="t56" style="position:absolute;left:293.00px;top:167.19px;font:400 13.8px/15.86px 'Liberation Sans', sans-serif;color:#333;white-space:nowrap;transform:scaleX(1.0477);transform-origin:left 0;">Design</span>
<svg style="position:absolute;left:1728px;top:169px;" width="12" height="9" viewBox="0 0 12 9"><path d="M1.5 2 L6 6.5 L10.5 2" fill="none" stroke="#555" stroke-width="1.3"/></svg>
<div style="position:absolute;left:5.5px;top:196px;width:21.0px;height:42px;background:#fff;border:1px solid #d4d4d4;box-sizing:border-box;"></div>
<div style="position:absolute;left:5.5px;top:216.5px;width:21.0px;height:1.0px;background:#a8a8a8;"></div>
<span id="t57" style="position:absolute;left:14.00px;top:203.53px;font:400 8px/9.19px 'Liberation Sans', sans-serif;color:#888;white-space:nowrap;transform:scaleX(0.8982);transform-origin:left 0;">1</span>
<span id="t58" style="position:absolute;left:14.00px;top:225.53px;font:400 8px/9.19px 'Liberation Sans', sans-serif;color:#888;white-space:nowrap;transform:scaleX(0.8982);transform-origin:left 0;">2</span>
<div style="position:absolute;left:401px;top:205px;width:254px;height:1px;background:#c8c8c8;"></div>
<div style="position:absolute;left:401px;top:205px;width:1px;height:4px;background:#c8c8c8;"></div>
<div style="position:absolute;left:655px;top:196px;width:21px;height:21px;background:#fff;border:1px solid #d4d4d4;box-sizing:border-box;"></div>
<div style="position:absolute;left:662px;top:206px;width:6px;height:1px;background:#777;"></div>
<div style="position:absolute;left:445.5px;top:225.5px;width:1.0px;height:1.0px;background:#bbb;"></div>
<div style="position:absolute;left:525.5px;top:225.5px;width:1.0px;height:1.0px;background:#bbb;"></div>
<div style="position:absolute;left:600.5px;top:225.5px;width:1.0px;height:1.0px;background:#bbb;"></div>
<div style="position:absolute;left:32px;top:261.8px;width:1693px;height:1.0px;background:#efefef;"></div>
<span id="t59" style="position:absolute;left:57.00px;top:245.86px;font:400 13.4px/15.40px 'Liberation Sans', sans-serif;color:#666;white-space:nowrap;transform:translateX(-50%) scaleX(1.0000);transform-origin:center 0;">A</span>
<span id="t60" style="position:absolute;left:368.00px;top:245.86px;font:400 13.4px/15.40px 'Liberation Sans', sans-serif;color:#666;white-space:nowrap;transform:translateX(-50%) scaleX(1.0000);transform-origin:center 0;">F</span>
<span id="t61" style="position:absolute;left:445.00px;top:245.86px;font:400 13.4px/15.40px 'Liberation Sans', sans-serif;color:#666;white-space:nowrap;transform:translateX(-50%) scaleX(1.0000);transform-origin:center 0;">G</span>
<span id="t62" style="position:absolute;left:526.00px;top:245.86px;font:400 13.4px/15.40px 'Liberation Sans', sans-serif;color:#666;white-space:nowrap;transform:translateX(-50%) scaleX(1.0000);transform-origin:center 0;">H</span>
<span id="t63" style="position:absolute;left:601.00px;top:245.86px;font:400 13.4px/15.40px 'Liberation Sans', sans-serif;color:#666;white-space:nowrap;transform:translateX(-50%) scaleX(1.0000);transform-origin:center 0;">I</span>
<span id="t64" style="position:absolute;left:666.00px;top:245.86px;font:400 13.4px/15.40px 'Liberation Sans', sans-serif;color:#666;white-space:nowrap;transform:translateX(-50%) scaleX(1.0000);transform-origin:center 0;">J</span>
<span id="t65" style="position:absolute;left:709.00px;top:245.86px;font:400 13.4px/15.40px 'Liberation Sans', sans-serif;color:#666;white-space:nowrap;transform:translateX(-50%) scaleX(1.0000);transform-origin:center 0;">K</span>
<div style="position:absolute;left:81px;top:244px;width:1px;height:18px;background:#e6e6e6;"></div>
<div style="position:absolute;left:335px;top:244px;width:1px;height:18px;background:#e6e6e6;"></div>
<div style="position:absolute;left:81px;top:260.5px;width:255px;height:1.8px;background:#217346;"></div>
<span id="t66" style="position:absolute;left:209.00px;top:245.86px;font:700 13.4px/15.40px 'Liberation Sans', sans-serif;color:#217346;white-space:nowrap;transform:translateX(-50%) scaleX(1.0000);transform-origin:center 0;">B</span>
<div style="position:absolute;left:0;top:244px;width:1747px;height:16px;overflow:hidden;"><div style="position:absolute;left:725.60px;top:0;width:5.31px;height:16px;overflow:hidden;"><span style="position:absolute;left:0.3px;top:0;font:400 12.5px/16px 'Liberation Sans',sans-serif;color:#666;white-space:nowrap;">N</span></div><div style="position:absolute;left:730.91px;top:0;width:5.31px;height:16px;overflow:hidden;"><span style="position:absolute;left:0.3px;top:0;font:400 12.5px/16px 'Liberation Sans',sans-serif;color:#666;white-space:nowrap;">O</span></div><div style="position:absolute;left:736.22px;top:0;width:5.31px;height:16px;overflow:hidden;"><span style="position:absolute;left:0.3px;top:0;font:400 12.5px/16px 'Liberation Sans',sans-serif;color:#666;white-space:nowrap;">P</span></div><div style="position:absolute;left:741.53px;top:0;width:5.31px;height:16px;overflow:hidden;"><span style="position:absolute;left:0.3px;top:0;font:400 12.5px/16px 'Liberation Sans',sans-serif;color:#666;white-space:nowrap;">Q</span></div><div style="position:absolute;left:746.84px;top:0;width:5.31px;height:16px;overflow:hidden;"><span style="position:absolute;left:0.3px;top:0;font:400 12.5px/16px 'Liberation Sans',sans-serif;color:#666;white-space:nowrap;">R</span></div><div style="position:absolute;left:752.15px;top:0;width:5.31px;height:16px;overflow:hidden;"><span style="position:absolute;left:0.3px;top:0;font:400 12.5px/16px 'Liberation Sans',sans-serif;color:#666;white-space:nowrap;">S</span></div><div style="position:absolute;left:757.46px;top:0;width:5.31px;height:16px;overflow:hidden;"><span style="position:absolute;left:0.3px;top:0;font:400 12.5px/16px 'Liberation Sans',sans-serif;color:#666;white-space:nowrap;">T</span></div><div style="position:absolute;left:762.77px;top:0;width:5.31px;height:16px;overflow:hidden;"><span style="position:absolute;left:0.3px;top:0;font:400 12.5px/16px 'Liberation Sans',sans-serif;color:#666;white-space:nowrap;">U</span></div><div style="position:absolute;left:768.08px;top:0;width:5.31px;height:16px;overflow:hidden;"><span style="position:absolute;left:0.3px;top:0;font:400 12.5px/16px 'Liberation Sans',sans-serif;color:#666;white-space:nowrap;">V</span></div><div style="position:absolute;left:773.39px;top:0;width:5.31px;height:16px;overflow:hidden;"><span style="position:absolute;left:0.3px;top:0;font:400 12.5px/16px 'Liberation Sans',sans-serif;color:#666;white-space:nowrap;">W</span></div><div style="position:absolute;left:778.70px;top:0;width:5.31px;height:16px;overflow:hidden;"><span style="position:absolute;left:0.3px;top:0;font:400 12.5px/16px 'Liberation Sans',sans-serif;color:#666;white-space:nowrap;">X</span></div><div style="position:absolute;left:784.01px;top:0;width:5.31px;height:16px;overflow:hidden;"><span style="position:absolute;left:0.3px;top:0;font:400 12.5px/16px 'Liberation Sans',sans-serif;color:#666;white-space:nowrap;">Y</span></div><div style="position:absolute;left:789.32px;top:0;width:5.31px;height:16px;overflow:hidden;"><span style="position:absolute;left:0.3px;top:0;font:400 12.5px/16px 'Liberation Sans',sans-serif;color:#666;white-space:nowrap;">Z</span></div><div style="position:absolute;left:794.63px;top:0;width:5.31px;height:16px;overflow:hidden;"><span style="position:absolute;left:0.3px;top:0;font:400 12.5px/16px 'Liberation Sans',sans-serif;color:#666;white-space:nowrap;">AA</span></div><div style="position:absolute;left:799.94px;top:0;width:5.31px;height:16px;overflow:hidden;"><span style="position:absolute;left:0.3px;top:0;font:400 12.5px/16px 'Liberation Sans',sans-serif;color:#666;white-space:nowrap;">AB</span></div><div style="position:absolute;left:805.25px;top:0;width:5.31px;height:16px;overflow:hidden;"><span style="position:absolute;left:0.3px;top:0;font:400 12.5px/16px 'Liberation Sans',sans-serif;color:#666;white-space:nowrap;">AC</span></div><div style="position:absolute;left:810.56px;top:0;width:5.31px;height:16px;overflow:hidden;"><span style="position:absolute;left:0.3px;top:0;font:400 12.5px/16px 'Liberation Sans',sans-serif;color:#666;white-space:nowrap;">AD</span></div><div style="position:absolute;left:815.87px;top:0;width:5.31px;height:16px;overflow:hidden;"><span style="position:absolute;left:0.3px;top:0;font:400 12.5px/16px 'Liberation Sans',sans-serif;color:#666;white-space:nowrap;">AE</span></div><div style="position:absolute;left:821.18px;top:0;width:5.31px;height:16px;overflow:hidden;"><span style="position:absolute;left:0.3px;top:0;font:400 12.5px/16px 'Liberation Sans',sans-serif;color:#666;white-space:nowrap;">AF</span></div><div style="position:absolute;left:826.49px;top:0;width:5.31px;height:16px;overflow:hidden;"><span style="position:absolute;left:0.3px;top:0;font:400 12.5px/16px 'Liberation Sans',sans-serif;color:#666;white-space:nowrap;">AG</span></div><div style="position:absolute;left:831.80px;top:0;width:5.31px;height:16px;overflow:hidden;"><span style="position:absolute;left:0.3px;top:0;font:400 12.5px/16px 'Liberation Sans',sans-serif;color:#666;white-space:nowrap;">AH</span></div><div style="position:absolute;left:837.11px;top:0;width:5.31px;height:16px;overflow:hidden;"><span style="position:absolute;left:0.3px;top:0;font:400 12.5px/16px 'Liberation Sans',sans-serif;color:#666;white-space:nowrap;">AI</span></div><div style="position:absolute;left:842.42px;top:0;width:5.31px;height:16px;overflow:hidden;"><span style="position:absolute;left:0.3px;top:0;font:400 12.5px/16px 'Liberation Sans',sans-serif;color:#666;white-space:nowrap;">AJ</span></div><div style="position:absolute;left:847.73px;top:0;width:5.31px;height:16px;overflow:hidden;"><span style="position:absolute;left:0.3px;top:0;font:400 12.5px/16px 'Liberation Sans',sans-serif;color:#666;white-space:nowrap;">AK</span></div><div style="position:absolute;left:853.04px;top:0;width:5.31px;height:16px;overflow:hidden;"><span style="position:absolute;left:0.3px;top:0;font:400 12.5px/16px 'Liberation Sans',sans-serif;color:#666;white-space:nowrap;">AL</span></div><div style="position:absolute;left:858.35px;top:0;width:5.31px;height:16px;overflow:hidden;"><span style="position:absolute;left:0.3px;top:0;font:400 12.5px/16px 'Liberation Sans',sans-serif;color:#666;white-space:nowrap;">AM</span></div><div style="position:absolute;left:863.66px;top:0;width:5.31px;height:16px;overflow:hidden;"><span style="position:absolute;left:0.3px;top:0;font:400 12.5px/16px 'Liberation Sans',sans-serif;color:#666;white-space:nowrap;">AN</span></div><div style="position:absolute;left:868.97px;top:0;width:5.31px;height:16px;overflow:hidden;"><span style="position:absolute;left:0.3px;top:0;font:400 12.5px/16px 'Liberation Sans',sans-serif;color:#666;white-space:nowrap;">AO</span></div><div style="position:absolute;left:874.28px;top:0;width:5.31px;height:16px;overflow:hidden;"><span style="position:absolute;left:0.3px;top:0;font:400 12.5px/16px 'Liberation Sans',sans-serif;color:#666;white-space:nowrap;">AP</span></div><div style="position:absolute;left:879.59px;top:0;width:5.31px;height:16px;overflow:hidden;"><span style="position:absolute;left:0.3px;top:0;font:400 12.5px/16px 'Liberation Sans',sans-serif;color:#666;white-space:nowrap;">AQ</span></div><div style="position:absolute;left:884.90px;top:0;width:5.31px;height:16px;overflow:hidden;"><span style="position:absolute;left:0.3px;top:0;font:400 12.5px/16px 'Liberation Sans',sans-serif;color:#666;white-space:nowrap;">AR</span></div><div style="position:absolute;left:890.21px;top:0;width:5.31px;height:16px;overflow:hidden;"><span style="position:absolute;left:0.3px;top:0;font:400 12.5px/16px 'Liberation Sans',sans-serif;color:#666;white-space:nowrap;">AS</span></div><div style="position:absolute;left:895.52px;top:0;width:5.31px;height:16px;overflow:hidden;"><span style="position:absolute;left:0.3px;top:0;font:400 12.5px/16px 'Liberation Sans',sans-serif;color:#666;white-space:nowrap;">AT</span></div><div style="position:absolute;left:900.83px;top:0;width:5.31px;height:16px;overflow:hidden;"><span style="position:absolute;left:0.3px;top:0;font:400 12.5px/16px 'Liberation Sans',sans-serif;color:#666;white-space:nowrap;">AU</span></div><div style="position:absolute;left:906.14px;top:0;width:5.31px;height:16px;overflow:hidden;"><span style="position:absolute;left:0.3px;top:0;font:400 12.5px/16px 'Liberation Sans',sans-serif;color:#666;white-space:nowrap;">AV</span></div><div style="position:absolute;left:911.45px;top:0;width:5.31px;height:16px;overflow:hidden;"><span style="position:absolute;left:0.3px;top:0;font:400 12.5px/16px 'Liberation Sans',sans-serif;color:#666;white-space:nowrap;">AW</span></div><div style="position:absolute;left:916.76px;top:0;width:5.31px;height:16px;overflow:hidden;"><span style="position:absolute;left:0.3px;top:0;font:400 12.5px/16px 'Liberation Sans',sans-serif;color:#666;white-space:nowrap;">AX</span></div><div style="position:absolute;left:922.07px;top:0;width:5.31px;height:16px;overflow:hidden;"><span style="position:absolute;left:0.3px;top:0;font:400 12.5px/16px 'Liberation Sans',sans-serif;color:#666;white-space:nowrap;">AY</span></div><div style="position:absolute;left:927.38px;top:0;width:5.31px;height:16px;overflow:hidden;"><span style="position:absolute;left:0.3px;top:0;font:400 12.5px/16px 'Liberation Sans',sans-serif;color:#666;white-space:nowrap;">AZ</span></div><div style="position:absolute;left:932.69px;top:0;width:5.31px;height:16px;overflow:hidden;"><span style="position:absolute;left:0.3px;top:0;font:400 12.5px/16px 'Liberation Sans',sans-serif;color:#666;white-space:nowrap;">BA</span></div><div style="position:absolute;left:938.00px;top:0;width:5.31px;height:16px;overflow:hidden;"><span style="position:absolute;left:0.3px;top:0;font:400 12.5px/16px 'Liberation Sans',sans-serif;color:#666;white-space:nowrap;">BB</span></div><div style="position:absolute;left:943.31px;top:0;width:5.31px;height:16px;overflow:hidden;"><span style="position:absolute;left:0.3px;top:0;font:400 12.5px/16px 'Liberation Sans',sans-serif;color:#666;white-space:nowrap;">BC</span></div><div style="position:absolute;left:948.62px;top:0;width:5.31px;height:16px;overflow:hidden;"><span style="position:absolute;left:0.3px;top:0;font:400 12.5px/16px 'Liberation Sans',sans-serif;color:#666;white-space:nowrap;">BD</span></div><div style="position:absolute;left:953.93px;top:0;width:5.31px;height:16px;overflow:hidden;"><span style="position:absolute;left:0.3px;top:0;font:400 12.5px/16px 'Liberation Sans',sans-serif;color:#666;white-space:nowrap;">BE</span></div><div style="position:absolute;left:959.24px;top:0;width:5.31px;height:16px;overflow:hidden;"><span style="position:absolute;left:0.3px;top:0;font:400 12.5px/16px 'Liberation Sans',sans-serif;color:#666;white-space:nowrap;">BF</span></div><div style="position:absolute;left:964.55px;top:0;width:5.31px;height:16px;overflow:hidden;"><span style="position:absolute;left:0.3px;top:0;font:400 12.5px/16px 'Liberation Sans',sans-serif;color:#666;white-space:nowrap;">BG</span></div><div style="position:absolute;left:969.86px;top:0;width:5.31px;height:16px;overflow:hidden;"><span style="position:absolute;left:0.3px;top:0;font:400 12.5px/16px 'Liberation Sans',sans-serif;color:#666;white-space:nowrap;">BH</span></div><div style="position:absolute;left:975.17px;top:0;width:5.31px;height:16px;overflow:hidden;"><span style="position:absolute;left:0.3px;top:0;font:400 12.5px/16px 'Liberation Sans',sans-serif;color:#666;white-space:nowrap;">BI</span></div><div style="position:absolute;left:980.48px;top:0;width:5.31px;height:16px;overflow:hidden;"><span style="position:absolute;left:0.3px;top:0;font:400 12.5px/16px 'Liberation Sans',sans-serif;color:#666;white-space:nowrap;">BJ</span></div><div style="position:absolute;left:985.79px;top:0;width:5.31px;height:16px;overflow:hidden;"><span style="position:absolute;left:0.3px;top:0;font:400 12.5px/16px 'Liberation Sans',sans-serif;color:#666;white-space:nowrap;">BK</span></div><div style="position:absolute;left:991.10px;top:0;width:5.31px;height:16px;overflow:hidden;"><span style="position:absolute;left:0.3px;top:0;font:400 12.5px/16px 'Liberation Sans',sans-serif;color:#666;white-space:nowrap;">BL</span></div><div style="position:absolute;left:996.41px;top:0;width:5.31px;height:16px;overflow:hidden;"><span style="position:absolute;left:0.3px;top:0;font:400 12.5px/16px 'Liberation Sans',sans-serif;color:#666;white-space:nowrap;">BM</span></div><div style="position:absolute;left:1001.72px;top:0;width:5.31px;height:16px;overflow:hidden;"><span style="position:absolute;left:0.3px;top:0;font:400 12.5px/16px 'Liberation Sans',sans-serif;color:#666;white-space:nowrap;">BN</span></div><div style="position:absolute;left:1007.03px;top:0;width:5.31px;height:16px;overflow:hidden;"><span style="position:absolute;left:0.3px;top:0;font:400 12.5px/16px 'Liberation Sans',sans-serif;color:#666;white-space:nowrap;">BO</span></div><div style="position:absolute;left:1012.34px;top:0;width:5.31px;height:16px;overflow:hidden;"><span style="position:absolute;left:0.3px;top:0;font:400 12.5px/16px 'Liberation Sans',sans-serif;color:#666;white-space:nowrap;">BP</span></div><div style="position:absolute;left:1017.65px;top:0;width:5.31px;height:16px;overflow:hidden;"><span style="position:absolute;left:0.3px;top:0;font:400 12.5px/16px 'Liberation Sans',sans-serif;color:#666;white-space:nowrap;">BQ</span></div><div style="position:absolute;left:1022.96px;top:0;width:5.31px;height:16px;overflow:hidden;"><span style="position:absolute;left:0.3px;top:0;font:400 12.5px/16px 'Liberation Sans',sans-serif;color:#666;white-space:nowrap;">BR</span></div><div style="position:absolute;left:1028.27px;top:0;width:5.31px;height:16px;overflow:hidden;"><span style="position:absolute;left:0.3px;top:0;font:400 12.5px/16px 'Liberation Sans',sans-serif;color:#666;white-space:nowrap;">BS</span></div><div style="position:absolute;left:1033.58px;top:0;width:5.31px;height:16px;overflow:hidden;"><span style="position:absolute;left:0.3px;top:0;font:400 12.5px/16px 'Liberation Sans',sans-serif;color:#666;white-space:nowrap;">BT</span></div><div style="position:absolute;left:1038.89px;top:0;width:5.31px;height:16px;overflow:hidden;"><span style="position:absolute;left:0.3px;top:0;font:400 12.5px/16px 'Liberation Sans',sans-serif;color:#666;white-space:nowrap;">BU</span></div><div style="position:absolute;left:1044.20px;top:0;width:5.31px;height:16px;overflow:hidden;"><span style="position:absolute;left:0.3px;top:0;font:400 12.5px/16px 'Liberation Sans',sans-serif;color:#666;white-space:nowrap;">BV</span></div><div style="position:absolute;left:1049.51px;top:0;width:5.31px;height:16px;overflow:hidden;"><span style="position:absolute;left:0.3px;top:0;font:400 12.5px/16px 'Liberation Sans',sans-serif;color:#666;white-space:nowrap;">BW</span></div><div style="position:absolute;left:1054.82px;top:0;width:5.31px;height:16px;overflow:hidden;"><span style="position:absolute;left:0.3px;top:0;font:400 12.5px/16px 'Liberation Sans',sans-serif;color:#666;white-space:nowrap;">BX</span></div><div style="position:absolute;left:1060.13px;top:0;width:5.31px;height:16px;overflow:hidden;"><span style="position:absolute;left:0.3px;top:0;font:400 12.5px/16px 'Liberation Sans',sans-serif;color:#666;white-space:nowrap;">BY</span></div><div style="position:absolute;left:1065.44px;top:0;width:5.31px;height:16px;overflow:hidden;"><span style="position:absolute;left:0.3px;top:0;font:400 12.5px/16px 'Liberation Sans',sans-serif;color:#666;white-space:nowrap;">BZ</span></div><div style="position:absolute;left:1070.75px;top:0;width:5.31px;height:16px;overflow:hidden;"><span style="position:absolute;left:0.3px;top:0;font:400 12.5px/16px 'Liberation Sans',sans-serif;color:#666;white-space:nowrap;">CA</span></div><div style="position:absolute;left:1076.06px;top:0;width:5.31px;height:16px;overflow:hidden;"><span style="position:absolute;left:0.3px;top:0;font:400 12.5px/16px 'Liberation Sans',sans-serif;color:#666;white-space:nowrap;">CB</span></div><div style="position:absolute;left:1081.37px;top:0;width:5.31px;height:16px;overflow:hidden;"><span style="position:absolute;left:0.3px;top:0;font:400 12.5px/16px 'Liberation Sans',sans-serif;color:#666;white-space:nowrap;">CC</span></div><div style="position:absolute;left:1086.68px;top:0;width:5.31px;height:16px;overflow:hidden;"><span style="position:absolute;left:0.3px;top:0;font:400 12.5px/16px 'Liberation Sans',sans-serif;color:#666;white-space:nowrap;">CD</span></div><div style="position:absolute;left:1091.99px;top:0;width:5.31px;height:16px;overflow:hidden;"><span style="position:absolute;left:0.3px;top:0;font:400 12.5px/16px 'Liberation Sans',sans-serif;color:#666;white-space:nowrap;">CE</span></div><div style="position:absolute;left:1097.30px;top:0;width:5.31px;height:16px;overflow:hidden;"><span style="position:absolute;left:0.3px;top:0;font:400 12.5px/16px 'Liberation Sans',sans-serif;color:#666;white-space:nowrap;">CF</span></div><div style="position:absolute;left:1102.61px;top:0;width:5.31px;height:16px;overflow:hidden;"><span style="position:absolute;left:0.3px;top:0;font:400 12.5px/16px 'Liberation Sans',sans-serif;color:#666;white-space:nowrap;">CG</span></div><div style="position:absolute;left:1107.92px;top:0;width:5.31px;height:16px;overflow:hidden;"><span style="position:absolute;left:0.3px;top:0;font:400 12.5px/16px 'Liberation Sans',sans-serif;color:#666;white-space:nowrap;">CH</span></div><div style="position:absolute;left:1113.23px;top:0;width:5.31px;height:16px;overflow:hidden;"><span style="position:absolute;left:0.3px;top:0;font:400 12.5px/16px 'Liberation Sans',sans-serif;color:#666;white-space:nowrap;">CI</span></div><div style="position:absolute;left:1118.54px;top:0;width:5.31px;height:16px;overflow:hidden;"><span style="position:absolute;left:0.3px;top:0;font:400 12.5px/16px 'Liberation Sans',sans-serif;color:#666;white-space:nowrap;">CJ</span></div><div style="position:absolute;left:1123.85px;top:0;width:5.31px;height:16px;overflow:hidden;"><span style="position:absolute;left:0.3px;top:0;font:400 12.5px/16px 'Liberation Sans',sans-serif;color:#666;white-space:nowrap;">CK</span></div><div style="position:absolute;left:1129.16px;top:0;width:5.31px;height:16px;overflow:hidden;"><span style="position:absolute;left:0.3px;top:0;font:400 12.5px/16px 'Liberation Sans',sans-serif;color:#666;white-space:nowrap;">CL</span></div><div style="position:absolute;left:1134.47px;top:0;width:5.31px;height:16px;overflow:hidden;"><span style="position:absolute;left:0.3px;top:0;font:400 12.5px/16px 'Liberation Sans',sans-serif;color:#666;white-space:nowrap;">CM</span></div><div style="position:absolute;left:1139.78px;top:0;width:5.31px;height:16px;overflow:hidden;"><span style="position:absolute;left:0.3px;top:0;font:400 12.5px/16px 'Liberation Sans',sans-serif;color:#666;white-space:nowrap;">CN</span></div><div style="position:absolute;left:1145.09px;top:0;width:5.31px;height:16px;overflow:hidden;"><span style="position:absolute;left:0.3px;top:0;font:400 12.5px/16px 'Liberation Sans',sans-serif;color:#666;white-space:nowrap;">CO</span></div><div style="position:absolute;left:1150.40px;top:0;width:5.31px;height:16px;overflow:hidden;"><span style="position:absolute;left:0.3px;top:0;font:400 12.5px/16px 'Liberation Sans',sans-serif;color:#666;white-space:nowrap;">CP</span></div><div style="position:absolute;left:1155.71px;top:0;width:5.31px;height:16px;overflow:hidden;"><span style="position:absolute;left:0.3px;top:0;font:400 12.5px/16px 'Liberation Sans',sans-serif;color:#666;white-space:nowrap;">CQ</span></div><div style="position:absolute;left:1161.02px;top:0;width:5.31px;height:16px;overflow:hidden;"><span style="position:absolute;left:0.3px;top:0;font:400 12.5px/16px 'Liberation Sans',sans-serif;color:#666;white-space:nowrap;">CR</span></div><div style="position:absolute;left:1166.33px;top:0;width:5.31px;height:16px;overflow:hidden;"><span style="position:absolute;left:0.3px;top:0;font:400 12.5px/16px 'Liberation Sans',sans-serif;color:#666;white-space:nowrap;">CS</span></div><div style="position:absolute;left:1171.64px;top:0;width:5.31px;height:16px;overflow:hidden;"><span style="position:absolute;left:0.3px;top:0;font:400 12.5px/16px 'Liberation Sans',sans-serif;color:#666;white-space:nowrap;">CT</span></div><div style="position:absolute;left:1176.95px;top:0;width:5.31px;height:16px;overflow:hidden;"><span style="position:absolute;left:0.3px;top:0;font:400 12.5px/16px 'Liberation Sans',sans-serif;color:#666;white-space:nowrap;">CU</span></div><div style="position:absolute;left:1182.26px;top:0;width:5.31px;height:16px;overflow:hidden;"><span style="position:absolute;left:0.3px;top:0;font:400 12.5px/16px 'Liberation Sans',sans-serif;color:#666;white-space:nowrap;">CV</span></div><div style="position:absolute;left:1187.57px;top:0;width:5.31px;height:16px;overflow:hidden;"><span style="position:absolute;left:0.3px;top:0;font:400 12.5px/16px 'Liberation Sans',sans-serif;color:#666;white-space:nowrap;">CW</span></div><div style="position:absolute;left:1192.88px;top:0;width:5.31px;height:16px;overflow:hidden;"><span style="position:absolute;left:0.3px;top:0;font:400 12.5px/16px 'Liberation Sans',sans-serif;color:#666;white-space:nowrap;">CX</span></div><div style="position:absolute;left:1198.19px;top:0;width:5.31px;height:16px;overflow:hidden;"><span style="position:absolute;left:0.3px;top:0;font:400 12.5px/16px 'Liberation Sans',sans-serif;color:#666;white-space:nowrap;">CY</span></div><div style="position:absolute;left:1203.50px;top:0;width:5.31px;height:16px;overflow:hidden;"><span style="position:absolute;left:0.3px;top:0;font:400 12.5px/16px 'Liberation Sans',sans-serif;color:#666;white-space:nowrap;">CZ</span></div><div style="position:absolute;left:1208.81px;top:0;width:5.31px;height:16px;overflow:hidden;"><span style="position:absolute;left:0.3px;top:0;font:400 12.5px/16px 'Liberation Sans',sans-serif;color:#666;white-space:nowrap;">DA</span></div><div style="position:absolute;left:1214.12px;top:0;width:5.31px;height:16px;overflow:hidden;"><span style="position:absolute;left:0.3px;top:0;font:400 12.5px/16px 'Liberation Sans',sans-serif;color:#666;white-space:nowrap;">DB</span></div><div style="position:absolute;left:1219.43px;top:0;width:5.31px;height:16px;overflow:hidden;"><span style="position:absolute;left:0.3px;top:0;font:400 12.5px/16px 'Liberation Sans',sans-serif;color:#666;white-space:nowrap;">DC</span></div><div style="position:absolute;left:1224.74px;top:0;width:5.31px;height:16px;overflow:hidden;"><span style="position:absolute;left:0.3px;top:0;font:400 12.5px/16px 'Liberation Sans',sans-serif;color:#666;white-space:nowrap;">DD</span></div><div style="position:absolute;left:1230.05px;top:0;width:5.31px;height:16px;overflow:hidden;"><span style="position:absolute;left:0.3px;top:0;font:400 12.5px/16px 'Liberation Sans',sans-serif;color:#666;white-space:nowrap;">DE</span></div><div style="position:absolute;left:1235.36px;top:0;width:5.31px;height:16px;overflow:hidden;"><span style="position:absolute;left:0.3px;top:0;font:400 12.5px/16px 'Liberation Sans',sans-serif;color:#666;white-space:nowrap;">DF</span></div><div style="position:absolute;left:1240.67px;top:0;width:5.31px;height:16px;overflow:hidden;"><span style="position:absolute;left:0.3px;top:0;font:400 12.5px/16px 'Liberation Sans',sans-serif;color:#666;white-space:nowrap;">DG</span></div><div style="position:absolute;left:1245.98px;top:0;width:5.31px;height:16px;overflow:hidden;"><span style="position:absolute;left:0.3px;top:0;font:400 12.5px/16px 'Liberation Sans',sans-serif;color:#666;white-space:nowrap;">DH</span></div><div style="position:absolute;left:1251.29px;top:0;width:5.31px;height:16px;overflow:hidden;"><span style="position:absolute;left:0.3px;top:0;font:400 12.5px/16px 'Liberation Sans',sans-serif;color:#666;white-space:nowrap;">DI</span></div><div style="position:absolute;left:1256.60px;top:0;width:5.31px;height:16px;overflow:hidden;"><span style="position:absolute;left:0.3px;top:0;font:400 12.5px/16px 'Liberation Sans',sans-serif;color:#666;white-space:nowrap;">DJ</span></div><div style="position:absolute;left:1261.91px;top:0;width:5.31px;height:16px;overflow:hidden;"><span style="position:absolute;left:0.3px;top:0;font:400 12.5px/16px 'Liberation Sans',sans-serif;color:#666;white-space:nowrap;">DK</span></div><div style="position:absolute;left:1267.22px;top:0;width:5.31px;height:16px;overflow:hidden;"><span style="position:absolute;left:0.3px;top:0;font:400 12.5px/16px 'Liberation Sans',sans-serif;color:#666;white-space:nowrap;">DL</span></div><div style="position:absolute;left:1272.53px;top:0;width:5.31px;height:16px;overflow:hidden;"><span style="position:absolute;left:0.3px;top:0;font:400 12.5px/16px 'Liberation Sans',sans-serif;color:#666;white-space:nowrap;">DM</span></div><div style="position:absolute;left:1277.84px;top:0;width:5.31px;height:16px;overflow:hidden;"><span style="position:absolute;left:0.3px;top:0;font:400 12.5px/16px 'Liberation Sans',sans-serif;color:#666;white-space:nowrap;">DN</span></div><div style="position:absolute;left:1283.15px;top:0;width:5.31px;height:16px;overflow:hidden;"><span style="position:absolute;left:0.3px;top:0;font:400 12.5px/16px 'Liberation Sans',sans-serif;color:#666;white-space:nowrap;">DO</span></div><div style="position:absolute;left:1288.46px;top:0;width:5.31px;height:16px;overflow:hidden;"><span style="position:absolute;left:0.3px;top:0;font:400 12.5px/16px 'Liberation Sans',sans-serif;color:#666;white-space:nowrap;">DP</span></div><div style="position:absolute;left:1293.77px;top:0;width:5.31px;height:16px;overflow:hidden;"><span style="position:absolute;left:0.3px;top:0;font:400 12.5px/16px 'Liberation Sans',sans-serif;color:#666;white-space:nowrap;">DQ</span></div><div style="position:absolute;left:1299.08px;top:0;width:5.31px;height:16px;overflow:hidden;"><span style="position:absolute;left:0.3px;top:0;font:400 12.5px/16px 'Liberation Sans',sans-serif;color:#666;white-space:nowrap;">DR</span></div><div style="position:absolute;left:1304.39px;top:0;width:5.31px;height:16px;overflow:hidden;"><span style="position:absolute;left:0.3px;top:0;font:400 12.5px/16px 'Liberation Sans',sans-serif;color:#666;white-space:nowrap;">DS</span></div><div style="position:absolute;left:1309.70px;top:0;width:5.31px;height:16px;overflow:hidden;"><span style="position:absolute;left:0.3px;top:0;font:400 12.5px/16px 'Liberation Sans',sans-serif;color:#666;white-space:nowrap;">DT</span></div><div style="position:absolute;left:1315.01px;top:0;width:5.31px;height:16px;overflow:hidden;"><span style="position:absolute;left:0.3px;top:0;font:400 12.5px/16px 'Liberation Sans',sans-serif;color:#666;white-space:nowrap;">DU</span></div><div style="position:absolute;left:1320.32px;top:0;width:5.31px;height:16px;overflow:hidden;"><span style="position:absolute;left:0.3px;top:0;font:400 12.5px/16px 'Liberation Sans',sans-serif;color:#666;white-space:nowrap;">DV</span></div><div style="position:absolute;left:1325.63px;top:0;width:5.31px;height:16px;overflow:hidden;"><span style="position:absolute;left:0.3px;top:0;font:400 12.5px/16px 'Liberation Sans',sans-serif;color:#666;white-space:nowrap;">DW</span></div><div style="position:absolute;left:1330.94px;top:0;width:5.31px;height:16px;overflow:hidden;"><span style="position:absolute;left:0.3px;top:0;font:400 12.5px/16px 'Liberation Sans',sans-serif;color:#666;white-space:nowrap;">DX</span></div><div style="position:absolute;left:1336.25px;top:0;width:5.31px;height:16px;overflow:hidden;"><span style="position:absolute;left:0.3px;top:0;font:400 12.5px/16px 'Liberation Sans',sans-serif;color:#666;white-space:nowrap;">DY</span></div><div style="position:absolute;left:1341.56px;top:0;width:5.31px;height:16px;overflow:hidden;"><span style="position:absolute;left:0.3px;top:0;font:400 12.5px/16px 'Liberation Sans',sans-serif;color:#666;white-space:nowrap;">DZ</span></div><div style="position:absolute;left:1346.87px;top:0;width:5.31px;height:16px;overflow:hidden;"><span style="position:absolute;left:0.3px;top:0;font:400 12.5px/16px 'Liberation Sans',sans-serif;color:#666;white-space:nowrap;">EA</span></div><div style="position:absolute;left:1352.18px;top:0;width:5.31px;height:16px;overflow:hidden;"><span style="position:absolute;left:0.3px;top:0;font:400 12.5px/16px 'Liberation Sans',sans-serif;color:#666;white-space:nowrap;">EB</span></div><div style="position:absolute;left:1357.49px;top:0;width:5.31px;height:16px;overflow:hidden;"><span style="position:absolute;left:0.3px;top:0;font:400 12.5px/16px 'Liberation Sans',sans-serif;color:#666;white-space:nowrap;">EC</span></div><div style="position:absolute;left:1362.80px;top:0;width:5.31px;height:16px;overflow:hidden;"><span style="position:absolute;left:0.3px;top:0;font:400 12.5px/16px 'Liberation Sans',sans-serif;color:#666;white-space:nowrap;">ED</span></div><div style="position:absolute;left:1368.11px;top:0;width:5.31px;height:16px;overflow:hidden;"><span style="position:absolute;left:0.3px;top:0;font:400 12.5px/16px 'Liberation Sans',sans-serif;color:#666;white-space:nowrap;">EE</span></div><div style="position:absolute;left:1373.42px;top:0;width:5.31px;height:16px;overflow:hidden;"><span style="position:absolute;left:0.3px;top:0;font:400 12.5px/16px 'Liberation Sans',sans-serif;color:#666;white-space:nowrap;">EF</span></div><div style="position:absolute;left:1378.73px;top:0;width:5.31px;height:16px;overflow:hidden;"><span style="position:absolute;left:0.3px;top:0;font:400 12.5px/16px 'Liberation Sans',sans-serif;color:#666;white-space:nowrap;">EG</span></div><div style="position:absolute;left:1384.04px;top:0;width:5.31px;height:16px;overflow:hidden;"><span style="position:absolute;left:0.3px;top:0;font:400 12.5px/16px 'Liberation Sans',sans-serif;color:#666;white-space:nowrap;">EH</span></div><div style="position:absolute;left:1389.35px;top:0;width:5.31px;height:16px;overflow:hidden;"><span style="position:absolute;left:0.3px;top:0;font:400 12.5px/16px 'Liberation Sans',sans-serif;color:#666;white-space:nowrap;">EI</span></div><div style="position:absolute;left:1394.66px;top:0;width:5.31px;height:16px;overflow:hidden;"><span style="position:absolute;left:0.3px;top:0;font:400 12.5px/16px 'Liberation Sans',sans-serif;color:#666;white-space:nowrap;">EJ</span></div><div style="position:absolute;left:1399.97px;top:0;width:5.31px;height:16px;overflow:hidden;"><span style="position:absolute;left:0.3px;top:0;font:400 12.5px/16px 'Liberation Sans',sans-serif;color:#666;white-space:nowrap;">EK</span></div><div style="position:absolute;left:1405.28px;top:0;width:5.31px;height:16px;overflow:hidden;"><span style="position:absolute;left:0.3px;top:0;font:400 12.5px/16px 'Liberation Sans',sans-serif;color:#666;white-space:nowrap;">EL</span></div><div style="position:absolute;left:1410.59px;top:0;width:5.31px;height:16px;overflow:hidden;"><span style="position:absolute;left:0.3px;top:0;font:400 12.5px/16px 'Liberation Sans',sans-serif;color:#666;white-space:nowrap;">EM</span></div><div style="position:absolute;left:1415.90px;top:0;width:5.31px;height:16px;overflow:hidden;"><span style="position:absolute;left:0.3px;top:0;font:400 12.5px/16px 'Liberation Sans',sans-serif;color:#666;white-space:nowrap;">EN</span></div><div style="position:absolute;left:1421.21px;top:0;width:5.31px;height:16px;overflow:hidden;"><span style="position:absolute;left:0.3px;top:0;font:400 12.5px/16px 'Liberation Sans',sans-serif;color:#666;white-space:nowrap;">EO</span></div><div style="position:absolute;left:1426.52px;top:0;width:5.31px;height:16px;overflow:hidden;"><span style="position:absolute;left:0.3px;top:0;font:400 12.5px/16px 'Liberation Sans',sans-serif;color:#666;white-space:nowrap;">EP</span></div><div style="position:absolute;left:1431.83px;top:0;width:5.31px;height:16px;overflow:hidden;"><span style="position:absolute;left:0.3px;top:0;font:400 12.5px/16px 'Liberation Sans',sans-serif;color:#666;white-space:nowrap;">EQ</span></div><div style="position:absolute;left:1437.14px;top:0;width:5.31px;height:16px;overflow:hidden;"><span style="position:absolute;left:0.3px;top:0;font:400 12.5px/16px 'Liberation Sans',sans-serif;color:#666;white-space:nowrap;">ER</span></div><div style="position:absolute;left:1442.45px;top:0;width:5.31px;height:16px;overflow:hidden;"><span style="position:absolute;left:0.3px;top:0;font:400 12.5px/16px 'Liberation Sans',sans-serif;color:#666;white-space:nowrap;">ES</span></div><div style="position:absolute;left:1447.76px;top:0;width:5.31px;height:16px;overflow:hidden;"><span style="position:absolute;left:0.3px;top:0;font:400 12.5px/16px 'Liberation Sans',sans-serif;color:#666;white-space:nowrap;">ET</span></div><div style="position:absolute;left:1453.07px;top:0;width:5.31px;height:16px;overflow:hidden;"><span style="position:absolute;left:0.3px;top:0;font:400 12.5px/16px 'Liberation Sans',sans-serif;color:#666;white-space:nowrap;">EU</span></div><div style="position:absolute;left:1458.38px;top:0;width:5.31px;height:16px;overflow:hidden;"><span style="position:absolute;left:0.3px;top:0;font:400 12.5px/16px 'Liberation Sans',sans-serif;color:#666;white-space:nowrap;">EV</span></div><div style="position:absolute;left:1463.69px;top:0;width:5.31px;height:16px;overflow:hidden;"><span style="position:absolute;left:0.3px;top:0;font:400 12.5px/16px 'Liberation Sans',sans-serif;color:#666;white-space:nowrap;">EW</span></div><div style="position:absolute;left:1469.00px;top:0;width:5.31px;height:16px;overflow:hidden;"><span style="position:absolute;left:0.3px;top:0;font:400 12.5px/16px 'Liberation Sans',sans-serif;color:#666;white-space:nowrap;">EX</span></div><div style="position:absolute;left:1474.31px;top:0;width:5.31px;height:16px;overflow:hidden;"><span style="position:absolute;left:0.3px;top:0;font:400 12.5px/16px 'Liberation Sans',sans-serif;color:#666;white-space:nowrap;">EY</span></div><div style="position:absolute;left:1479.62px;top:0;width:5.31px;height:16px;overflow:hidden;"><span style="position:absolute;left:0.3px;top:0;font:400 12.5px/16px 'Liberation Sans',sans-serif;color:#666;white-space:nowrap;">EZ</span></div><div style="position:absolute;left:1484.93px;top:0;width:5.31px;height:16px;overflow:hidden;"><span style="position:absolute;left:0.3px;top:0;font:400 12.5px/16px 'Liberation Sans',sans-serif;color:#666;white-space:nowrap;">FA</span></div><div style="position:absolute;left:1490.24px;top:0;width:5.31px;height:16px;overflow:hidden;"><span style="position:absolute;left:0.3px;top:0;font:400 12.5px/16px 'Liberation Sans',sans-serif;color:#666;white-space:nowrap;">FB</span></div><div style="position:absolute;left:1495.55px;top:0;width:5.31px;height:16px;overflow:hidden;"><span style="position:absolute;left:0.3px;top:0;font:400 12.5px/16px 'Liberation Sans',sans-serif;color:#666;white-space:nowrap;">FC</span></div><div style="position:absolute;left:1500.86px;top:0;width:5.31px;height:16px;overflow:hidden;"><span style="position:absolute;left:0.3px;top:0;font:400 12.5px/16px 'Liberation Sans',sans-serif;color:#666;white-space:nowrap;">FD</span></div><div style="position:absolute;left:1506.17px;top:0;width:5.31px;height:16px;overflow:hidden;"><span style="position:absolute;left:0.3px;top:0;font:400 12.5px/16px 'Liberation Sans',sans-serif;color:#666;white-space:nowrap;">FE</span></div><div style="position:absolute;left:1511.48px;top:0;width:5.31px;height:16px;overflow:hidden;"><span style="position:absolute;left:0.3px;top:0;font:400 12.5px/16px 'Liberation Sans',sans-serif;color:#666;white-space:nowrap;">FF</span></div><div style="position:absolute;left:1516.79px;top:0;width:5.31px;height:16px;overflow:hidden;"><span style="position:absolute;left:0.3px;top:0;font:400 12.5px/16px 'Liberation Sans',sans-serif;color:#666;white-space:nowrap;">FG</span></div><div style="position:absolute;left:1522.10px;top:0;width:5.31px;height:16px;overflow:hidden;"><span style="position:absolute;left:0.3px;top:0;font:400 12.5px/16px 'Liberation Sans',sans-serif;color:#666;white-space:nowrap;">FH</span></div><div style="position:absolute;left:1527.41px;top:0;width:5.31px;height:16px;overflow:hidden;"><span style="position:absolute;left:0.3px;top:0;font:400 12.5px/16px 'Liberation Sans',sans-serif;color:#666;white-space:nowrap;">FI</span></div><div style="position:absolute;left:1532.72px;top:0;width:5.31px;height:16px;overflow:hidden;"><span style="position:absolute;left:0.3px;top:0;font:400 12.5px/16px 'Liberation Sans',sans-serif;color:#666;white-space:nowrap;">FJ</span></div><div style="position:absolute;left:1538.03px;top:0;width:5.31px;height:16px;overflow:hidden;"><span style="position:absolute;left:0.3px;top:0;font:400 12.5px/16px 'Liberation Sans',sans-serif;color:#666;white-space:nowrap;">FK</span></div><div style="position:absolute;left:1543.34px;top:0;width:5.31px;height:16px;overflow:hidden;"><span style="position:absolute;left:0.3px;top:0;font:400 12.5px/16px 'Liberation Sans',sans-serif;color:#666;white-space:nowrap;">FL</span></div><div style="position:absolute;left:1548.65px;top:0;width:5.31px;height:16px;overflow:hidden;"><span style="position:absolute;left:0.3px;top:0;font:400 12.5px/16px 'Liberation Sans',sans-serif;color:#666;white-space:nowrap;">FM</span></div><div style="position:absolute;left:1553.96px;top:0;width:5.31px;height:16px;overflow:hidden;"><span style="position:absolute;left:0.3px;top:0;font:400 12.5px/16px 'Liberation Sans',sans-serif;color:#666;white-space:nowrap;">FN</span></div><div style="position:absolute;left:1559.27px;top:0;width:5.31px;height:16px;overflow:hidden;"><span style="position:absolute;left:0.3px;top:0;font:400 12.5px/16px 'Liberation Sans',sans-serif;color:#666;white-space:nowrap;">FO</span></div><div style="position:absolute;left:1564.58px;top:0;width:5.31px;height:16px;overflow:hidden;"><span style="position:absolute;left:0.3px;top:0;font:400 12.5px/16px 'Liberation Sans',sans-serif;color:#666;white-space:nowrap;">FP</span></div><div style="position:absolute;left:1569.89px;top:0;width:5.31px;height:16px;overflow:hidden;"><span style="position:absolute;left:0.3px;top:0;font:400 12.5px/16px 'Liberation Sans',sans-serif;color:#666;white-space:nowrap;">FQ</span></div><div style="position:absolute;left:1575.20px;top:0;width:5.31px;height:16px;overflow:hidden;"><span style="position:absolute;left:0.3px;top:0;font:400 12.5px/16px 'Liberation Sans',sans-serif;color:#666;white-space:nowrap;">FR</span></div><div style="position:absolute;left:1580.51px;top:0;width:5.31px;height:16px;overflow:hidden;"><span style="position:absolute;left:0.3px;top:0;font:400 12.5px/16px 'Liberation Sans',sans-serif;color:#666;white-space:nowrap;">FS</span></div><div style="position:absolute;left:1585.82px;top:0;width:5.31px;height:16px;overflow:hidden;"><span style="position:absolute;left:0.3px;top:0;font:400 12.5px/16px 'Liberation Sans',sans-serif;color:#666;white-space:nowrap;">FT</span></div><div style="position:absolute;left:1591.13px;top:0;width:5.31px;height:16px;overflow:hidden;"><span style="position:absolute;left:0.3px;top:0;font:400 12.5px/16px 'Liberation Sans',sans-serif;color:#666;white-space:nowrap;">FU</span></div><div style="position:absolute;left:1596.44px;top:0;width:5.31px;height:16px;overflow:hidden;"><span style="position:absolute;left:0.3px;top:0;font:400 12.5px/16px 'Liberation Sans',sans-serif;color:#666;white-space:nowrap;">FV</span></div><div style="position:absolute;left:1601.75px;top:0;width:5.31px;height:16px;overflow:hidden;"><span style="position:absolute;left:0.3px;top:0;font:400 12.5px/16px 'Liberation Sans',sans-serif;color:#666;white-space:nowrap;">FW</span></div><div style="position:absolute;left:1607.06px;top:0;width:5.31px;height:16px;overflow:hidden;"><span style="position:absolute;left:0.3px;top:0;font:400 12.5px/16px 'Liberation Sans',sans-serif;color:#666;white-space:nowrap;">FX</span></div><div style="position:absolute;left:1612.37px;top:0;width:5.31px;height:16px;overflow:hidden;"><span style="position:absolute;left:0.3px;top:0;font:400 12.5px/16px 'Liberation Sans',sans-serif;color:#666;white-space:nowrap;">FY</span></div><div style="position:absolute;left:1617.68px;top:0;width:5.31px;height:16px;overflow:hidden;"><span style="position:absolute;left:0.3px;top:0;font:400 12.5px/16px 'Liberation Sans',sans-serif;color:#666;white-space:nowrap;">FZ</span></div><div style="position:absolute;left:1622.99px;top:0;width:5.31px;height:16px;overflow:hidden;"><span style="position:absolute;left:0.3px;top:0;font:400 12.5px/16px 'Liberation Sans',sans-serif;color:#666;white-space:nowrap;">GA</span></div><div style="position:absolute;left:1628.30px;top:0;width:5.31px;height:16px;overflow:hidden;"><span style="position:absolute;left:0.3px;top:0;font:400 12.5px/16px 'Liberation Sans',sans-serif;color:#666;white-space:nowrap;">GB</span></div><div style="position:absolute;left:1633.61px;top:0;width:5.31px;height:16px;overflow:hidden;"><span style="position:absolute;left:0.3px;top:0;font:400 12.5px/16px 'Liberation Sans',sans-serif;color:#666;white-space:nowrap;">GC</span></div><div style="position:absolute;left:1638.92px;top:0;width:5.31px;height:16px;overflow:hidden;"><span style="position:absolute;left:0.3px;top:0;font:400 12.5px/16px 'Liberation Sans',sans-serif;color:#666;white-space:nowrap;">GD</span></div><div style="position:absolute;left:1644.23px;top:0;width:5.31px;height:16px;overflow:hidden;"><span style="position:absolute;left:0.3px;top:0;font:400 12.5px/16px 'Liberation Sans',sans-serif;color:#666;white-space:nowrap;">GE</span></div><div style="position:absolute;left:1649.54px;top:0;width:5.31px;height:16px;overflow:hidden;"><span style="position:absolute;left:0.3px;top:0;font:400 12.5px/16px 'Liberation Sans',sans-serif;color:#666;white-space:nowrap;">GF</span></div><div style="position:absolute;left:1654.85px;top:0;width:5.31px;height:16px;overflow:hidden;"><span style="position:absolute;left:0.3px;top:0;font:400 12.5px/16px 'Liberation Sans',sans-serif;color:#666;white-space:nowrap;">GG</span></div><div style="position:absolute;left:1660.16px;top:0;width:5.31px;height:16px;overflow:hidden;"><span style="position:absolute;left:0.3px;top:0;font:400 12.5px/16px 'Liberation Sans',sans-serif;color:#666;white-space:nowrap;">GH</span></div><div style="position:absolute;left:1665.47px;top:0;width:5.31px;height:16px;overflow:hidden;"><span style="position:absolute;left:0.3px;top:0;font:400 12.5px/16px 'Liberation Sans',sans-serif;color:#666;white-space:nowrap;">GI</span></div><div style="position:absolute;left:1670.78px;top:0;width:5.31px;height:16px;overflow:hidden;"><span style="position:absolute;left:0.3px;top:0;font:400 12.5px/16px 'Liberation Sans',sans-serif;color:#666;white-space:nowrap;">GJ</span></div><div style="position:absolute;left:1676.09px;top:0;width:5.31px;height:16px;overflow:hidden;"><span style="position:absolute;left:0.3px;top:0;font:400 12.5px/16px 'Liberation Sans',sans-serif;color:#666;white-space:nowrap;">GK</span></div><div style="position:absolute;left:1681.40px;top:0;width:5.31px;height:16px;overflow:hidden;"><span style="position:absolute;left:0.3px;top:0;font:400 12.5px/16px 'Liberation Sans',sans-serif;color:#666;white-space:nowrap;">GL</span></div><div style="position:absolute;left:1686.71px;top:0;width:5.31px;height:16px;overflow:hidden;"><span style="position:absolute;left:0.3px;top:0;font:400 12.5px/16px 'Liberation Sans',sans-serif;color:#666;white-space:nowrap;">GM</span></div><div style="position:absolute;left:1692.02px;top:0;width:5.31px;height:16px;overflow:hidden;"><span style="position:absolute;left:0.3px;top:0;font:400 12.5px/16px 'Liberation Sans',sans-serif;color:#666;white-space:nowrap;">GN</span></div><div style="position:absolute;left:1697.33px;top:0;width:5.31px;height:16px;overflow:hidden;"><span style="position:absolute;left:0.3px;top:0;font:400 12.5px/16px 'Liberation Sans',sans-serif;color:#666;white-space:nowrap;">GO</span></div><div style="position:absolute;left:1702.64px;top:0;width:5.31px;height:16px;overflow:hidden;"><span style="position:absolute;left:0.3px;top:0;font:400 12.5px/16px 'Liberation Sans',sans-serif;color:#666;white-space:nowrap;">GP</span></div><div style="position:absolute;left:1707.95px;top:0;width:5.31px;height:16px;overflow:hidden;"><span style="position:absolute;left:0.3px;top:0;font:400 12.5px/16px 'Liberation Sans',sans-serif;color:#666;white-space:nowrap;">GQ</span></div><div style="position:absolute;left:1713.26px;top:0;width:5.31px;height:16px;overflow:hidden;"><span style="position:absolute;left:0.3px;top:0;font:400 12.5px/16px 'Liberation Sans',sans-serif;color:#666;white-space:nowrap;">GR</span></div><div style="position:absolute;left:1718.57px;top:0;width:5.31px;height:16px;overflow:hidden;"><span style="position:absolute;left:0.3px;top:0;font:400 12.5px/16px 'Liberation Sans',sans-serif;color:#666;white-space:nowrap;">GS</span></div><div style="position:absolute;left:1723.88px;top:0;width:5.31px;height:16px;overflow:hidden;"><span style="position:absolute;left:0.3px;top:0;font:400 12.5px/16px 'Liberation Sans',sans-serif;color:#666;white-space:nowrap;">GT</span></div></div>
<div style="position:absolute;left:725px;top:195px;width:1px;height:686.5px;background:#c6c6c6;"></div>
<div style="position:absolute;left:32px;top:262px;width:1px;height:619.5px;background:#e1e1e1;"></div>
<span id="t67" style="position:absolute;left:16.50px;top:303.21px;font:400 14px/16.09px 'Liberation Sans', sans-serif;color:#707070;white-space:nowrap;transform:translateX(-50%) scaleX(0.8978);transform-origin:center 0;">2</span>
<span id="t68" style="position:absolute;left:16.50px;top:377.31px;font:400 14px/16.09px 'Liberation Sans', sans-serif;color:#707070;white-space:nowrap;transform:translateX(-50%) scaleX(0.8978);transform-origin:center 0;">4</span>
<span id="t69" style="position:absolute;left:16.50px;top:411.21px;font:400 14px/16.09px 'Liberation Sans', sans-serif;color:#707070;white-space:nowrap;transform:translateX(-50%) scaleX(0.8978);transform-origin:center 0;">7</span>
<span id="t70" style="position:absolute;left:16.50px;top:462.21px;font:400 14px/16.09px 'Liberation Sans', sans-serif;color:#707070;white-space:nowrap;transform:translateX(-50%) scaleX(1.0999);transform-origin:center 0;">11</span>
<span id="t71" style="position:absolute;left:16.50px;top:487.21px;font:400 14px/16.09px 'Liberation Sans', sans-serif;color:#707070;white-space:nowrap;transform:translateX(-50%) scaleX(1.0271);transform-origin:center 0;">13</span>
<span id="t72" style="position:absolute;left:16.50px;top:513.01px;font:400 14px/16.09px 'Liberation Sans', sans-serif;color:#707070;white-space:nowrap;transform:translateX(-50%) scaleX(1.0271);transform-origin:center 0;">14</span>
<span id="t73" style="position:absolute;left:16.50px;top:537.61px;font:400 14px/16.09px 'Liberation Sans', sans-serif;color:#707070;white-space:nowrap;transform:translateX(-50%) scaleX(1.0271);transform-origin:center 0;">15</span>
<span id="t74" style="position:absolute;left:16.50px;top:566.11px;font:400 14px/16.09px 'Liberation Sans', sans-serif;color:#707070;white-space:nowrap;transform:translateX(-50%) scaleX(1.0271);transform-origin:center 0;">16</span>
<span id="t75" style="position:absolute;left:16.50px;top:593.41px;font:400 14px/16.09px 'Liberation Sans', sans-serif;color:#707070;white-space:nowrap;transform:translateX(-50%) scaleX(1.0271);transform-origin:center 0;">17</span>
<span id="t76" style="position:absolute;left:16.50px;top:620.71px;font:400 14px/16.09px 'Liberation Sans', sans-serif;color:#707070;white-space:nowrap;transform:translateX(-50%) scaleX(1.0271);transform-origin:center 0;">18</span>
<span id="t77" style="position:absolute;left:16.50px;top:648.01px;font:400 14px/16.09px 'Liberation Sans', sans-serif;color:#707070;white-space:nowrap;transform:translateX(-50%) scaleX(1.0271);transform-origin:center 0;">19</span>
<span id="t78" style="position:absolute;left:16.50px;top:675.31px;font:400 14px/16.09px 'Liberation Sans', sans-serif;color:#707070;white-space:nowrap;transform:translateX(-50%) scaleX(1.0271);transform-origin:center 0;">20</span>
<span id="t79" style="position:absolute;left:16.00px;top:702.61px;font:700 14px/16.09px 'Liberation Sans', sans-serif;color:#2a8a55;white-space:nowrap;transform:translateX(-50%) scaleX(1.0271);transform-origin:center 0;">21</span>
<span id="t80" style="position:absolute;left:16.50px;top:729.91px;font:400 14px/16.09px 'Liberation Sans', sans-serif;color:#707070;white-space:nowrap;transform:translateX(-50%) scaleX(1.0271);transform-origin:center 0;">22</span>
<span id="t81" style="position:absolute;left:16.50px;top:757.21px;font:400 14px/16.09px 'Liberation Sans', sans-serif;color:#707070;white-space:nowrap;transform:translateX(-50%) scaleX(1.0271);transform-origin:center 0;">23</span>
<span id="t82" style="position:absolute;left:16.50px;top:784.51px;font:400 14px/16.09px 'Liberation Sans', sans-serif;color:#707070;white-space:nowrap;transform:translateX(-50%) scaleX(1.0271);transform-origin:center 0;">24</span>
<span id="t83" style="position:absolute;left:16.50px;top:811.81px;font:400 14px/16.09px 'Liberation Sans', sans-serif;color:#707070;white-space:nowrap;transform:translateX(-50%) scaleX(1.0271);transform-origin:center 0;">25</span>
<span id="t84" style="position:absolute;left:16.50px;top:839.11px;font:400 14px/16.09px 'Liberation Sans', sans-serif;color:#707070;white-space:nowrap;transform:translateX(-50%) scaleX(1.0271);transform-origin:center 0;">26</span>
<span id="t85" style="position:absolute;left:16.50px;top:866.41px;font:400 14px/16.09px 'Liberation Sans', sans-serif;color:#707070;white-space:nowrap;transform:translateX(-50%) scaleX(1.0271);transform-origin:center 0;">27</span>
<svg style="position:absolute;left:11px;top:428px;" width="12" height="20" viewBox="0 0 12 20"><path d="M2.8 2.6 A3 2.6 0 0 0 8.6 2.6" fill="none" stroke="#888" stroke-width="1.1"/><path d="M2.6 13.5 Q5.5 12.6 8 10.2" fill="none" stroke="#999" stroke-width="1.1"/></svg>
<div style="position:absolute;left:3px;top:556.2px;width:29px;height:0.8px;background:#ececec;"></div>
<div style="position:absolute;left:30.8px;top:693px;width:1.5px;height:28px;background:#3f9563;"></div>
<span id="t86" style="position:absolute;left:38.00px;top:274.48px;font:400 36.5px/41.94px 'Liberation Sans', sans-serif;color:#9fe80a;white-space:nowrap;transform:scaleX(1.0828);transform-origin:left 0;">Projekt:</span>
<span id="t87" style="position:absolute;left:41.00px;top:333.23px;font:700 48.5px/55.73px 'Liberation Sans', sans-serif;color:#9fe80a;white-space:nowrap;transform:scaleX(1.0317);transform-origin:left 0;">Musterprojekt Nr.815</span>
<span id="t88" style="position:absolute;left:35.00px;top:409.88px;font:700 15px/17.23px 'Liberation Sans', sans-serif;color:#000;white-space:nowrap;transform:scaleX(1.0813);transform-origin:left 0;">Projektleiter: Hans Muster</span>
<span id="t89" style="position:absolute;left:354.00px;top:409.88px;font:700 15px/17.23px 'Liberation Sans', sans-serif;color:#000;white-space:nowrap;transform:scaleX(1.0576);transform-origin:left 0;">Projektstart [PS] :</span>
<span id="t90" style="position:absolute;left:493.00px;top:409.88px;font:400 15px/17.23px 'Liberation Sans', sans-serif;color:#a6ed1a;white-space:nowrap;transform:scaleX(1.0789);transform-origin:left 0;">09.06.15</span>
<div style="position:absolute;left:724.5px;top:262px;width:1.1px;height:187px;background:#bdbdbd;"></div>
<div style="position:absolute;left:549px;top:336px;width:176px;height:1.5px;background:#a0a0a0;"></div>
<div style="position:absolute;left:616.5px;top:392px;width:108.5px;height:1.5px;background:#a0a0a0;"></div>
<div style="position:absolute;left:617px;top:447.5px;width:108px;height:1.5px;background:#a0a0a0;"></div>
<span id="t91" style="position:absolute;left:636.70px;top:279.28px;font:700 17.5px/20.11px 'Liberation Sans', sans-serif;color:#111;white-space:nowrap;transform:translateX(-50%) scaleX(1.0497);transform-origin:center 0;">Leere Zeile</span>
<span id="t92" style="position:absolute;left:636.70px;top:304.28px;font:700 17.5px/20.11px 'Liberation Sans', sans-serif;color:#111;white-space:nowrap;transform:translateX(-50%) scaleX(1.0559);transform-origin:center 0;">einfügen</span>
<span id="t93" style="position:absolute;left:670.50px;top:351.93px;font:700 13px/14.94px 'Liberation Sans', sans-serif;color:#111;white-space:nowrap;transform:translateX(-50%) scaleX(1.0137);transform-origin:center 0;">Formeln</span>
<span id="t94" style="position:absolute;left:670.50px;top:370.15px;font:400 13.3px/15.28px 'Liberation Sans', sans-serif;color:#333;white-space:nowrap;transform:translateX(-50%) scaleX(1.0715);transform-origin:center 0;">Wiederherstelle</span>
<span id="t95" style="position:absolute;left:670.50px;top:407.93px;font:700 13px/14.94px 'Liberation Sans', sans-serif;color:#111;white-space:nowrap;transform:translateX(-50%) scaleX(1.0170);transform-origin:center 0;">Projektplan</span>
<span id="t96" style="position:absolute;left:670.50px;top:426.15px;font:400 13.3px/15.28px 'Liberation Sans', sans-serif;color:#333;white-space:nowrap;transform:translateX(-50%) scaleX(1.0034);transform-origin:center 0;">löschen</span>
<svg style="position:absolute;left:491px;top:406px;" width="6" height="6" viewBox="0 0 6 6"><path d="M0 0 H5 L0 5Z" fill="#1f8a3a"/></svg>
<div style="position:absolute;left:32.3px;top:452.8px;width:1692.7px;height:103.5px;background:#a6f500;"></div>
<div style="position:absolute;left:32.3px;top:556px;width:1692.7px;height:1px;background:#e0e0e0;"></div>
<span id="t97" style="position:absolute;left:35.00px;top:458.82px;font:700 14.2px/16.32px 'Liberation Sans', sans-serif;color:#fffde8;white-space:nowrap;transform:scaleX(1.0466);transform-origin:left 0;">© Copyright by MeineVorlagen – www.MeineVorlagen.com - Alle Rechte vorbehalten</span>
<span id="t98" style="position:absolute;left:46.00px;top:509.29px;font:700 15px/17.23px 'Liberation Sans', sans-serif;color:#fffde8;white-space:nowrap;transform:scaleX(1.0991);transform-origin:left 0;">Nr.</span>
<span id="t99" style="position:absolute;left:84.00px;top:509.29px;font:700 15px/17.23px 'Liberation Sans', sans-serif;color:#fffde8;white-space:nowrap;transform:scaleX(0.9500);transform-origin:left 0;">Aufgabe</span>
<span id="t100" style="position:absolute;left:353.00px;top:509.29px;font:700 15px/17.23px 'Liberation Sans', sans-serif;color:#fffde8;white-space:nowrap;transform:scaleX(1.0328);transform-origin:left 0;">Wer</span>
<span id="t101" style="position:absolute;left:428.00px;top:509.29px;font:700 15px/17.23px 'Liberation Sans', sans-serif;color:#fffde8;white-space:nowrap;transform:scaleX(0.9653);transform-origin:left 0;">Start</span>
<span id="t102" style="position:absolute;left:505.00px;top:509.29px;font:700 15px/17.23px 'Liberation Sans', sans-serif;color:#fffde8;white-space:nowrap;transform:scaleX(0.9640);transform-origin:left 0;">Dauer</span>
<span id="t103" style="position:absolute;left:584.00px;top:509.29px;font:700 15px/17.23px 'Liberation Sans', sans-serif;color:#fffde8;white-space:nowrap;transform:scaleX(0.9267);transform-origin:left 0;">Ende</span>
<span id="t104" style="position:absolute;left:645.00px;top:509.29px;font:700 15px/17.23px 'Liberation Sans', sans-serif;color:#fffde8;white-space:nowrap;transform:scaleX(0.9380);transform-origin:left 0;">Status</span>
<span id="t105" style="position:absolute;left:697.00px;top:486.25px;font:700 14.5px/16.66px 'Liberation Sans', sans-serif;color:#fff;white-space:nowrap;transform:scaleX(1.0343);transform-origin:left 0;">KW</span>
<div style="position:absolute;left:62.7px;top:537.2px;width:18.3px;height:18.8px;background:#fff;border:1px solid #e8e8e8;box-sizing:border-box;"></div>
<svg style="position:absolute;left:67.9px;top:543.8px;" width="8" height="6" viewBox="0 0 8 6"><path d="M1 1.5 L7 1.5 L4 4.5 Z" fill="#666"/></svg>
<div style="position:absolute;left:317.7px;top:537.2px;width:18.3px;height:18.8px;background:#fff;border:1px solid #e8e8e8;box-sizing:border-box;"></div>
<svg style="position:absolute;left:322.9px;top:543.8px;" width="8" height="6" viewBox="0 0 8 6"><path d="M1 1.5 L7 1.5 L4 4.5 Z" fill="#666"/></svg>
<div style="position:absolute;left:380.7px;top:537.2px;width:18.3px;height:18.8px;background:#fff;border:1px solid #e8e8e8;box-sizing:border-box;"></div>
<svg style="position:absolute;left:385.9px;top:543.8px;" width="8" height="6" viewBox="0 0 8 6"><path d="M1 1.5 L7 1.5 L4 4.5 Z" fill="#666"/></svg>
<div style="position:absolute;left:471.7px;top:537.2px;width:18.3px;height:18.8px;background:#fff;border:1px solid #e8e8e8;box-sizing:border-box;"></div>
<svg style="position:absolute;left:476.9px;top:543.8px;" width="8" height="6" viewBox="0 0 8 6"><path d="M1 1.5 L7 1.5 L4 4.5 Z" fill="#666"/></svg>
<div style="position:absolute;left:542.7px;top:537.2px;width:18.3px;height:18.8px;background:#fff;border:1px solid #e8e8e8;box-sizing:border-box;"></div>
<svg style="position:absolute;left:547.9px;top:543.8px;" width="8" height="6" viewBox="0 0 8 6"><path d="M1 1.5 L7 1.5 L4 4.5 Z" fill="#666"/></svg>
<div style="position:absolute;left:621.7px;top:537.2px;width:18.3px;height:18.8px;background:#fff;border:1px solid #e8e8e8;box-sizing:border-box;"></div>
<svg style="position:absolute;left:626.9px;top:543.8px;" width="8" height="6" viewBox="0 0 8 6"><path d="M1 1.5 L7 1.5 L4 4.5 Z" fill="#666"/></svg>
<div style="position:absolute;left:672.7px;top:537.2px;width:18.3px;height:18.8px;background:#fff;border:1px solid #e8e8e8;box-sizing:border-box;"></div>
<svg style="position:absolute;left:677.9px;top:543.8px;" width="8" height="6" viewBox="0 0 8 6"><path d="M1 1.5 L7 1.5 L4 4.5 Z" fill="#666"/></svg>
<div style="position:absolute;left:706.7px;top:537.2px;width:18.3px;height:18.8px;background:#fff;border:1px solid #e8e8e8;box-sizing:border-box;"></div>
<svg style="position:absolute;left:711.9px;top:543.8px;" width="8" height="6" viewBox="0 0 8 6"><path d="M1 1.5 L7 1.5 L4 4.5 Z" fill="#666"/></svg>
<div style="position:absolute;left:752.15px;top:481.6px;width:10.62px;height:74.4px;background:#fff;"></div>
<div style="position:absolute;left:789.32px;top:481.6px;width:10.62px;height:74.4px;background:#fff;"></div>
<div style="position:absolute;left:826.49px;top:481.6px;width:10.62px;height:74.4px;background:#fff;"></div>
<div style="position:absolute;left:863.66px;top:481.6px;width:10.62px;height:74.4px;background:#fff;"></div>
<div style="position:absolute;left:900.83px;top:481.6px;width:10.62px;height:74.4px;background:#fff;"></div>
<div style="position:absolute;left:938.0px;top:481.6px;width:10.62px;height:74.4px;background:#fff;"></div>
<div style="position:absolute;left:975.17px;top:481.6px;width:10.62px;height:74.4px;background:#fff;"></div>
<div style="position:absolute;left:1012.34px;top:481.6px;width:10.62px;height:74.4px;background:#fff;"></div>
<div style="position:absolute;left:1049.51px;top:481.6px;width:10.62px;height:74.4px;background:#fff;"></div>
<div style="position:absolute;left:1086.68px;top:481.6px;width:10.62px;height:74.4px;background:#fff;"></div>
<div style="position:absolute;left:1123.85px;top:481.6px;width:10.62px;height:74.4px;background:#fff;"></div>
<div style="position:absolute;left:1161.02px;top:481.6px;width:10.62px;height:74.4px;background:#fff;"></div>
<div style="position:absolute;left:1198.19px;top:481.6px;width:10.62px;height:74.4px;background:#fff;"></div>
<div style="position:absolute;left:1235.36px;top:481.6px;width:10.62px;height:74.4px;background:#fff;"></div>
<div style="position:absolute;left:1272.53px;top:481.6px;width:10.62px;height:74.4px;background:#fff;"></div>
<div style="position:absolute;left:1309.7px;top:481.6px;width:10.62px;height:74.4px;background:#fff;"></div>
<div style="position:absolute;left:1346.87px;top:481.6px;width:10.62px;height:74.4px;background:#fff;"></div>
<div style="position:absolute;left:1384.04px;top:481.6px;width:10.62px;height:74.4px;background:#fff;"></div>
<div style="position:absolute;left:1421.21px;top:481.6px;width:10.62px;height:74.4px;background:#fff;"></div>
<div style="position:absolute;left:1458.38px;top:481.6px;width:10.62px;height:74.4px;background:#fff;"></div>
<div style="position:absolute;left:1495.55px;top:481.6px;width:10.62px;height:74.4px;background:#fff;"></div>
<div style="position:absolute;left:1532.72px;top:481.6px;width:10.62px;height:74.4px;background:#fff;"></div>
<div style="position:absolute;left:1569.89px;top:481.6px;width:10.62px;height:74.4px;background:#fff;"></div>
<div style="position:absolute;left:1607.06px;top:481.6px;width:10.62px;height:74.4px;background:#fff;"></div>
<div style="position:absolute;left:1644.23px;top:481.6px;width:10.62px;height:74.4px;background:#fff;"></div>
<div style="position:absolute;left:1681.4px;top:481.6px;width:10.62px;height:74.4px;background:#fff;"></div>
<div style="position:absolute;left:1718.57px;top:481.6px;width:10.62px;height:74.4px;background:#fff;"></div>
<div style="position:absolute;left:725px;top:452.8px;width:1px;height:103.2px;background:#9aa890;"></div>
<span id="t106" style="position:absolute;left:738.88px;top:487.13px;font:700 10.5px/12.06px 'Liberation Sans', sans-serif;color:#fff;white-space:nowrap;transform:translateX(-50%) scaleX(0.8984);transform-origin:center 0;">24</span>
<div style="position:absolute;left:738.88px;top:531px;width:0;height:0;"><span style="position:absolute;left:0;top:0;transform:translate(-50%,-50%) rotate(-90deg) scaleX(0.865);font:700 12.5px/13px 'Liberation Sans',sans-serif;color:#fff;white-space:nowrap;">08.06.</span></div>
<span id="t107" style="position:absolute;left:776.04px;top:487.13px;font:700 10.5px/12.06px 'Liberation Sans', sans-serif;color:#fff;white-space:nowrap;transform:translateX(-50%) scaleX(0.8984);transform-origin:center 0;">25</span>
<div style="position:absolute;left:776.04px;top:531px;width:0;height:0;"><span style="position:absolute;left:0;top:0;transform:translate(-50%,-50%) rotate(-90deg) scaleX(0.865);font:700 12.5px/13px 'Liberation Sans',sans-serif;color:#fff;white-space:nowrap;">15.06.</span></div>
<span id="t108" style="position:absolute;left:813.22px;top:487.13px;font:700 10.5px/12.06px 'Liberation Sans', sans-serif;color:#fff;white-space:nowrap;transform:translateX(-50%) scaleX(0.8984);transform-origin:center 0;">26</span>
<div style="position:absolute;left:813.22px;top:531px;width:0;height:0;"><span style="position:absolute;left:0;top:0;transform:translate(-50%,-50%) rotate(-90deg) scaleX(0.865);font:700 12.5px/13px 'Liberation Sans',sans-serif;color:#fff;white-space:nowrap;">22.06.</span></div>
<span id="t109" style="position:absolute;left:850.38px;top:487.13px;font:700 10.5px/12.06px 'Liberation Sans', sans-serif;color:#fff;white-space:nowrap;transform:translateX(-50%) scaleX(0.8984);transform-origin:center 0;">27</span>
<div style="position:absolute;left:850.38px;top:531px;width:0;height:0;"><span style="position:absolute;left:0;top:0;transform:translate(-50%,-50%) rotate(-90deg) scaleX(0.865);font:700 12.5px/13px 'Liberation Sans',sans-serif;color:#fff;white-space:nowrap;">29.06.</span></div>
<span id="t110" style="position:absolute;left:887.55px;top:487.13px;font:700 10.5px/12.06px 'Liberation Sans', sans-serif;color:#fff;white-space:nowrap;transform:translateX(-50%) scaleX(0.8984);transform-origin:center 0;">28</span>
<div style="position:absolute;left:887.55px;top:531px;width:0;height:0;"><span style="position:absolute;left:0;top:0;transform:translate(-50%,-50%) rotate(-90deg) scaleX(0.865);font:700 12.5px/13px 'Liberation Sans',sans-serif;color:#fff;white-space:nowrap;">06.07.</span></div>
<span id="t111" style="position:absolute;left:924.73px;top:487.13px;font:700 10.5px/12.06px 'Liberation Sans', sans-serif;color:#fff;white-space:nowrap;transform:translateX(-50%) scaleX(0.8984);transform-origin:center 0;">29</span>
<div style="position:absolute;left:924.73px;top:531px;width:0;height:0;"><span style="position:absolute;left:0;top:0;transform:translate(-50%,-50%) rotate(-90deg) scaleX(0.865);font:700 12.5px/13px 'Liberation Sans',sans-serif;color:#fff;white-space:nowrap;">13.07.</span></div>
<span id="t112" style="position:absolute;left:961.89px;top:487.13px;font:700 10.5px/12.06px 'Liberation Sans', sans-serif;color:#fff;white-space:nowrap;transform:translateX(-50%) scaleX(0.8984);transform-origin:center 0;">30</span>
<div style="position:absolute;left:961.89px;top:531px;width:0;height:0;"><span style="position:absolute;left:0;top:0;transform:translate(-50%,-50%) rotate(-90deg) scaleX(0.865);font:700 12.5px/13px 'Liberation Sans',sans-serif;color:#fff;white-space:nowrap;">20.07.</span></div>
<span id="t113" style="position:absolute;left:999.06px;top:487.13px;font:700 10.5px/12.06px 'Liberation Sans', sans-serif;color:#fff;white-space:nowrap;transform:translateX(-50%) scaleX(0.8984);transform-origin:center 0;">31</span>
<div style="position:absolute;left:999.06px;top:531px;width:0;height:0;"><span style="position:absolute;left:0;top:0;transform:translate(-50%,-50%) rotate(-90deg) scaleX(0.865);font:700 12.5px/13px 'Liberation Sans',sans-serif;color:#fff;white-space:nowrap;">27.07.</span></div>
<span id="t114" style="position:absolute;left:1036.24px;top:487.13px;font:700 10.5px/12.06px 'Liberation Sans', sans-serif;color:#fff;white-space:nowrap;transform:translateX(-50%) scaleX(0.8984);transform-origin:center 0;">32</span>
<div style="position:absolute;left:1036.24px;top:531px;width:0;height:0;"><span style="position:absolute;left:0;top:0;transform:translate(-50%,-50%) rotate(-90deg) scaleX(0.865);font:700 12.5px/13px 'Liberation Sans',sans-serif;color:#fff;white-space:nowrap;">03.08.</span></div>
<span id="t115" style="position:absolute;left:1073.41px;top:487.13px;font:700 10.5px/12.06px 'Liberation Sans', sans-serif;color:#fff;white-space:nowrap;transform:translateX(-50%) scaleX(0.8984);transform-origin:center 0;">33</span>
<div style="position:absolute;left:1073.41px;top:531px;width:0;height:0;"><span style="position:absolute;left:0;top:0;transform:translate(-50%,-50%) rotate(-90deg) scaleX(0.865);font:700 12.5px/13px 'Liberation Sans',sans-serif;color:#fff;white-space:nowrap;">10.08.</span></div>
<span id="t116" style="position:absolute;left:1110.58px;top:487.13px;font:700 10.5px/12.06px 'Liberation Sans', sans-serif;color:#fff;white-space:nowrap;transform:translateX(-50%) scaleX(0.8984);transform-origin:center 0;">34</span>
<div style="position:absolute;left:1110.58px;top:531px;width:0;height:0;"><span style="position:absolute;left:0;top:0;transform:translate(-50%,-50%) rotate(-90deg) scaleX(0.865);font:700 12.5px/13px 'Liberation Sans',sans-serif;color:#fff;white-space:nowrap;">17.08.</span></div>
<span id="t117" style="position:absolute;left:1147.75px;top:487.13px;font:700 10.5px/12.06px 'Liberation Sans', sans-serif;color:#fff;white-space:nowrap;transform:translateX(-50%) scaleX(0.8984);transform-origin:center 0;">35</span>
<div style="position:absolute;left:1147.75px;top:531px;width:0;height:0;"><span style="position:absolute;left:0;top:0;transform:translate(-50%,-50%) rotate(-90deg) scaleX(0.865);font:700 12.5px/13px 'Liberation Sans',sans-serif;color:#fff;white-space:nowrap;">24.08.</span></div>
<span id="t118" style="position:absolute;left:1184.92px;top:487.13px;font:700 10.5px/12.06px 'Liberation Sans', sans-serif;color:#fff;white-space:nowrap;transform:translateX(-50%) scaleX(0.8984);transform-origin:center 0;">36</span>
<div style="position:absolute;left:1184.92px;top:531px;width:0;height:0;"><span style="position:absolute;left:0;top:0;transform:translate(-50%,-50%) rotate(-90deg) scaleX(0.865);font:700 12.5px/13px 'Liberation Sans',sans-serif;color:#fff;white-space:nowrap;">31.08.</span></div>
<span id="t119" style="position:absolute;left:1222.09px;top:487.13px;font:700 10.5px/12.06px 'Liberation Sans', sans-serif;color:#fff;white-space:nowrap;transform:translateX(-50%) scaleX(0.8984);transform-origin:center 0;">37</span>
<div style="position:absolute;left:1222.09px;top:531px;width:0;height:0;"><span style="position:absolute;left:0;top:0;transform:translate(-50%,-50%) rotate(-90deg) scaleX(0.865);font:700 12.5px/13px 'Liberation Sans',sans-serif;color:#fff;white-space:nowrap;">07.09.</span></div>
<span id="t120" style="position:absolute;left:1259.26px;top:487.13px;font:700 10.5px/12.06px 'Liberation Sans', sans-serif;color:#fff;white-space:nowrap;transform:translateX(-50%) scaleX(0.8984);transform-origin:center 0;">38</span>
<div style="position:absolute;left:1259.26px;top:531px;width:0;height:0;"><span style="position:absolute;left:0;top:0;transform:translate(-50%,-50%) rotate(-90deg) scaleX(0.865);font:700 12.5px/13px 'Liberation Sans',sans-serif;color:#fff;white-space:nowrap;">14.09.</span></div>
<span id="t121" style="position:absolute;left:1296.43px;top:487.13px;font:700 10.5px/12.06px 'Liberation Sans', sans-serif;color:#fff;white-space:nowrap;transform:translateX(-50%) scaleX(0.8984);transform-origin:center 0;">39</span>
<div style="position:absolute;left:1296.43px;top:531px;width:0;height:0;"><span style="position:absolute;left:0;top:0;transform:translate(-50%,-50%) rotate(-90deg) scaleX(0.865);font:700 12.5px/13px 'Liberation Sans',sans-serif;color:#fff;white-space:nowrap;">21.09.</span></div>
<span id="t122" style="position:absolute;left:1333.60px;top:487.13px;font:700 10.5px/12.06px 'Liberation Sans', sans-serif;color:#fff;white-space:nowrap;transform:translateX(-50%) scaleX(0.8984);transform-origin:center 0;">40</span>
<div style="position:absolute;left:1333.60px;top:531px;width:0;height:0;"><span style="position:absolute;left:0;top:0;transform:translate(-50%,-50%) rotate(-90deg) scaleX(0.865);font:700 12.5px/13px 'Liberation Sans',sans-serif;color:#fff;white-space:nowrap;">28.09.</span></div>
<span id="t123" style="position:absolute;left:1370.77px;top:487.13px;font:700 10.5px/12.06px 'Liberation Sans', sans-serif;color:#fff;white-space:nowrap;transform:translateX(-50%) scaleX(0.8984);transform-origin:center 0;">41</span>
<div style="position:absolute;left:1370.77px;top:531px;width:0;height:0;"><span style="position:absolute;left:0;top:0;transform:translate(-50%,-50%) rotate(-90deg) scaleX(0.865);font:700 12.5px/13px 'Liberation Sans',sans-serif;color:#fff;white-space:nowrap;">05.10.</span></div>
<span id="t124" style="position:absolute;left:1407.94px;top:487.13px;font:700 10.5px/12.06px 'Liberation Sans', sans-serif;color:#fff;white-space:nowrap;transform:translateX(-50%) scaleX(0.8984);transform-origin:center 0;">42</span>
<div style="position:absolute;left:1407.94px;top:531px;width:0;height:0;"><span style="position:absolute;left:0;top:0;transform:translate(-50%,-50%) rotate(-90deg) scaleX(0.865);font:700 12.5px/13px 'Liberation Sans',sans-serif;color:#fff;white-space:nowrap;">12.10.</span></div>
<span id="t125" style="position:absolute;left:1445.11px;top:487.13px;font:700 10.5px/12.06px 'Liberation Sans', sans-serif;color:#fff;white-space:nowrap;transform:translateX(-50%) scaleX(0.8984);transform-origin:center 0;">43</span>
<div style="position:absolute;left:1445.11px;top:531px;width:0;height:0;"><span style="position:absolute;left:0;top:0;transform:translate(-50%,-50%) rotate(-90deg) scaleX(0.865);font:700 12.5px/13px 'Liberation Sans',sans-serif;color:#fff;white-space:nowrap;">19.10.</span></div>
<span id="t126" style="position:absolute;left:1482.28px;top:487.13px;font:700 10.5px/12.06px 'Liberation Sans', sans-serif;color:#fff;white-space:nowrap;transform:translateX(-50%) scaleX(0.8984);transform-origin:center 0;">44</span>
<div style="position:absolute;left:1482.28px;top:531px;width:0;height:0;"><span style="position:absolute;left:0;top:0;transform:translate(-50%,-50%) rotate(-90deg) scaleX(0.865);font:700 12.5px/13px 'Liberation Sans',sans-serif;color:#fff;white-space:nowrap;">26.10.</span></div>
<span id="t127" style="position:absolute;left:1519.45px;top:487.13px;font:700 10.5px/12.06px 'Liberation Sans', sans-serif;color:#fff;white-space:nowrap;transform:translateX(-50%) scaleX(0.8984);transform-origin:center 0;">45</span>
<div style="position:absolute;left:1519.45px;top:531px;width:0;height:0;"><span style="position:absolute;left:0;top:0;transform:translate(-50%,-50%) rotate(-90deg) scaleX(0.865);font:700 12.5px/13px 'Liberation Sans',sans-serif;color:#fff;white-space:nowrap;">02.11.</span></div>
<span id="t128" style="position:absolute;left:1556.62px;top:487.13px;font:700 10.5px/12.06px 'Liberation Sans', sans-serif;color:#fff;white-space:nowrap;transform:translateX(-50%) scaleX(0.8984);transform-origin:center 0;">46</span>
<div style="position:absolute;left:1556.62px;top:531px;width:0;height:0;"><span style="position:absolute;left:0;top:0;transform:translate(-50%,-50%) rotate(-90deg) scaleX(0.865);font:700 12.5px/13px 'Liberation Sans',sans-serif;color:#fff;white-space:nowrap;">09.11.</span></div>
<span id="t129" style="position:absolute;left:1593.79px;top:487.13px;font:700 10.5px/12.06px 'Liberation Sans', sans-serif;color:#fff;white-space:nowrap;transform:translateX(-50%) scaleX(0.8984);transform-origin:center 0;">47</span>
<div style="position:absolute;left:1593.79px;top:531px;width:0;height:0;"><span style="position:absolute;left:0;top:0;transform:translate(-50%,-50%) rotate(-90deg) scaleX(0.865);font:700 12.5px/13px 'Liberation Sans',sans-serif;color:#fff;white-space:nowrap;">16.11.</span></div>
<span id="t130" style="position:absolute;left:1630.96px;top:487.13px;font:700 10.5px/12.06px 'Liberation Sans', sans-serif;color:#fff;white-space:nowrap;transform:translateX(-50%) scaleX(0.8984);transform-origin:center 0;">48</span>
<div style="position:absolute;left:1630.96px;top:531px;width:0;height:0;"><span style="position:absolute;left:0;top:0;transform:translate(-50%,-50%) rotate(-90deg) scaleX(0.865);font:700 12.5px/13px 'Liberation Sans',sans-serif;color:#fff;white-space:nowrap;">23.11.</span></div>
<span id="t131" style="position:absolute;left:1668.12px;top:487.13px;font:700 10.5px/12.06px 'Liberation Sans', sans-serif;color:#fff;white-space:nowrap;transform:translateX(-50%) scaleX(0.8984);transform-origin:center 0;">49</span>
<div style="position:absolute;left:1668.12px;top:531px;width:0;height:0;"><span style="position:absolute;left:0;top:0;transform:translate(-50%,-50%) rotate(-90deg) scaleX(0.865);font:700 12.5px/13px 'Liberation Sans',sans-serif;color:#fff;white-space:nowrap;">30.11.</span></div>
<span id="t132" style="position:absolute;left:1705.30px;top:487.13px;font:700 10.5px/12.06px 'Liberation Sans', sans-serif;color:#fff;white-space:nowrap;transform:translateX(-50%) scaleX(0.8984);transform-origin:center 0;">50</span>
<div style="position:absolute;left:1705.30px;top:531px;width:0;height:0;"><span style="position:absolute;left:0;top:0;transform:translate(-50%,-50%) rotate(-90deg) scaleX(0.865);font:700 12.5px/13px 'Liberation Sans',sans-serif;color:#fff;white-space:nowrap;">07.12.</span></div>
<div style="position:absolute;left:32.3px;top:585.8px;width:692.7px;height:23.9px;background:#d9d9d9;"></div>
<div style="position:absolute;left:726.1px;top:585.8px;width:25.55px;height:23.9px;background:#d9d9d9;"></div>
<div style="position:absolute;left:763.27px;top:585.8px;width:25.55px;height:23.9px;background:#d9d9d9;"></div>
<div style="position:absolute;left:800.44px;top:585.8px;width:25.55px;height:23.9px;background:#d9d9d9;"></div>
<div style="position:absolute;left:837.61px;top:585.8px;width:25.55px;height:23.9px;background:#d9d9d9;"></div>
<div style="position:absolute;left:874.78px;top:585.8px;width:25.55px;height:23.9px;background:#d9d9d9;"></div>
<div style="position:absolute;left:911.95px;top:585.8px;width:25.55px;height:23.9px;background:#d9d9d9;"></div>
<div style="position:absolute;left:949.12px;top:585.8px;width:25.55px;height:23.9px;background:#d9d9d9;"></div>
<div style="position:absolute;left:986.29px;top:585.8px;width:25.55px;height:23.9px;background:#d9d9d9;"></div>
<div style="position:absolute;left:1023.46px;top:585.8px;width:25.55px;height:23.9px;background:#d9d9d9;"></div>
<div style="position:absolute;left:1060.63px;top:585.8px;width:25.55px;height:23.9px;background:#d9d9d9;"></div>
<div style="position:absolute;left:1097.8px;top:585.8px;width:25.55px;height:23.9px;background:#d9d9d9;"></div>
<div style="position:absolute;left:1134.97px;top:585.8px;width:25.55px;height:23.9px;background:#d9d9d9;"></div>
<div style="position:absolute;left:1172.14px;top:585.8px;width:25.55px;height:23.9px;background:#d9d9d9;"></div>
<div style="position:absolute;left:1209.31px;top:585.8px;width:25.55px;height:23.9px;background:#d9d9d9;"></div>
<div style="position:absolute;left:1246.48px;top:585.8px;width:25.55px;height:23.9px;background:#d9d9d9;"></div>
<div style="position:absolute;left:1283.65px;top:585.8px;width:25.55px;height:23.9px;background:#d9d9d9;"></div>
<div style="position:absolute;left:1320.82px;top:585.8px;width:25.55px;height:23.9px;background:#d9d9d9;"></div>
<div style="position:absolute;left:1357.99px;top:585.8px;width:25.55px;height:23.9px;background:#d9d9d9;"></div>
<div style="position:absolute;left:1395.16px;top:585.8px;width:25.55px;height:23.9px;background:#d9d9d9;"></div>
<div style="position:absolute;left:1432.33px;top:585.8px;width:25.55px;height:23.9px;background:#d9d9d9;"></div>
<div style="position:absolute;left:1469.5px;top:585.8px;width:25.55px;height:23.9px;background:#d9d9d9;"></div>
<div style="position:absolute;left:1506.67px;top:585.8px;width:25.55px;height:23.9px;background:#d9d9d9;"></div>
<div style="position:absolute;left:1543.84px;top:585.8px;width:25.55px;height:23.9px;background:#d9d9d9;"></div>
<div style="position:absolute;left:1581.01px;top:585.8px;width:25.55px;height:23.9px;background:#d9d9d9;"></div>
<div style="position:absolute;left:1618.18px;top:585.8px;width:25.55px;height:23.9px;background:#d9d9d9;"></div>
<div style="position:absolute;left:1655.35px;top:585.8px;width:25.55px;height:23.9px;background:#d9d9d9;"></div>
<div style="position:absolute;left:1692.52px;top:585.8px;width:25.55px;height:23.9px;background:#d9d9d9;"></div>
<span id="t133" style="position:absolute;left:35.00px;top:592.53px;font:700 13px/14.94px 'Liberation Sans', sans-serif;color:#111;white-space:nowrap;transform:scaleX(1.0144);transform-origin:left 0;">1,</span>
<span id="t134" style="position:absolute;left:84.40px;top:592.53px;font:700 13px/14.94px 'Liberation Sans', sans-serif;color:#111;white-space:nowrap;transform:scaleX(1.0087);transform-origin:left 0;">Kick-Off</span>
<span id="t135" style="position:absolute;left:445.30px;top:592.53px;font:700 13px/14.94px 'Liberation Sans', sans-serif;color:#111;white-space:nowrap;transform:translateX(-50%) scaleX(1.0393);transform-origin:center 0;">09.06.15</span>
<span id="t136" style="position:absolute;left:526.00px;top:592.53px;font:700 13px/14.94px 'Liberation Sans', sans-serif;color:#e00000;white-space:nowrap;transform:translateX(-50%) scaleX(1.1527);transform-origin:center 0;">M</span>
<svg style="position:absolute;left:705.8px;top:590.6px;" width="16" height="16" viewBox="0 0 16 16"><circle cx="8" cy="8" r="7.3" fill="#f27478" stroke="#cf3f4a" stroke-width="1"/><circle cx="7.3" cy="6.8" r="4" fill="#f79a9a" opacity="0.6"/><path d="M5.2 5.2 L10.8 10.8 M10.8 5.2 L5.2 10.8" stroke="#fff" stroke-width="1.7"/></svg>
<svg style="position:absolute;left:399.5px;top:585.0px;" width="6" height="6" viewBox="0 0 6 6"><path d="M0 0 H5 L0 5Z" fill="#1f8a3a"/></svg>
<div style="position:absolute;left:32.3px;top:640.4px;width:692.7px;height:23.9px;background:#d9d9d9;"></div>
<div style="position:absolute;left:726.1px;top:640.4px;width:25.55px;height:23.9px;background:#d9d9d9;"></div>
<div style="position:absolute;left:763.27px;top:640.4px;width:25.55px;height:23.9px;background:#d9d9d9;"></div>
<div style="position:absolute;left:800.44px;top:640.4px;width:25.55px;height:23.9px;background:#d9d9d9;"></div>
<div style="position:absolute;left:837.61px;top:640.4px;width:25.55px;height:23.9px;background:#d9d9d9;"></div>
<div style="position:absolute;left:874.78px;top:640.4px;width:25.55px;height:23.9px;background:#d9d9d9;"></div>
<div style="position:absolute;left:911.95px;top:640.4px;width:25.55px;height:23.9px;background:#d9d9d9;"></div>
<div style="position:absolute;left:949.12px;top:640.4px;width:25.55px;height:23.9px;background:#d9d9d9;"></div>
<div style="position:absolute;left:986.29px;top:640.4px;width:25.55px;height:23.9px;background:#d9d9d9;"></div>
<div style="position:absolute;left:1023.46px;top:640.4px;width:25.55px;height:23.9px;background:#d9d9d9;"></div>
<div style="position:absolute;left:1060.63px;top:640.4px;width:25.55px;height:23.9px;background:#d9d9d9;"></div>
<div style="position:absolute;left:1097.8px;top:640.4px;width:25.55px;height:23.9px;background:#d9d9d9;"></div>
<div style="position:absolute;left:1134.97px;top:640.4px;width:25.55px;height:23.9px;background:#d9d9d9;"></div>
<div style="position:absolute;left:1172.14px;top:640.4px;width:25.55px;height:23.9px;background:#d9d9d9;"></div>
<div style="position:absolute;left:1209.31px;top:640.4px;width:25.55px;height:23.9px;background:#d9d9d9;"></div>
<div style="position:absolute;left:1246.48px;top:640.4px;width:25.55px;height:23.9px;background:#d9d9d9;"></div>
<div style="position:absolute;left:1283.65px;top:640.4px;width:25.55px;height:23.9px;background:#d9d9d9;"></div>
<div style="position:absolute;left:1320.82px;top:640.4px;width:25.55px;height:23.9px;background:#d9d9d9;"></div>
<div style="position:absolute;left:1357.99px;top:640.4px;width:25.55px;height:23.9px;background:#d9d9d9;"></div>
<div style="position:absolute;left:1395.16px;top:640.4px;width:25.55px;height:23.9px;background:#d9d9d9;"></div>
<div style="position:absolute;left:1432.33px;top:640.4px;width:25.55px;height:23.9px;background:#d9d9d9;"></div>
<div style="position:absolute;left:1469.5px;top:640.4px;width:25.55px;height:23.9px;background:#d9d9d9;"></div>
<div style="position:absolute;left:1506.67px;top:640.4px;width:25.55px;height:23.9px;background:#d9d9d9;"></div>
<div style="position:absolute;left:1543.84px;top:640.4px;width:25.55px;height:23.9px;background:#d9d9d9;"></div>
<div style="position:absolute;left:1581.01px;top:640.4px;width:25.55px;height:23.9px;background:#d9d9d9;"></div>
<div style="position:absolute;left:1618.18px;top:640.4px;width:25.55px;height:23.9px;background:#d9d9d9;"></div>
<div style="position:absolute;left:1655.35px;top:640.4px;width:25.55px;height:23.9px;background:#d9d9d9;"></div>
<div style="position:absolute;left:1692.52px;top:640.4px;width:25.55px;height:23.9px;background:#d9d9d9;"></div>
<span id="t137" style="position:absolute;left:35.00px;top:647.13px;font:700 13px/14.94px 'Liberation Sans', sans-serif;color:#111;white-space:nowrap;transform:scaleX(1.0144);transform-origin:left 0;">2,</span>
<span id="t138" style="position:absolute;left:84.40px;top:647.13px;font:700 13px/14.94px 'Liberation Sans', sans-serif;color:#111;white-space:nowrap;transform:scaleX(1.0179);transform-origin:left 0;">Konzept</span>
<span id="t139" style="position:absolute;left:445.30px;top:647.13px;font:700 13px/14.94px 'Liberation Sans', sans-serif;color:#111;white-space:nowrap;transform:translateX(-50%) scaleX(1.0393);transform-origin:center 0;">23.06.15</span>
<span id="t140" style="position:absolute;left:526.60px;top:647.13px;font:700 13px/14.94px 'Liberation Sans', sans-serif;color:#111;white-space:nowrap;transform:translateX(-50%) scaleX(1.0630);transform-origin:center 0;">21 D</span>
<span id="t141" style="position:absolute;left:601.50px;top:647.13px;font:700 13px/14.94px 'Liberation Sans', sans-serif;color:#111;white-space:nowrap;transform:translateX(-50%) scaleX(1.0472);transform-origin:center 0;">21.07.15</span>
<svg style="position:absolute;left:705.8px;top:645.2px;" width="16" height="16" viewBox="0 0 16 16"><circle cx="8" cy="8" r="7.3" fill="#f27478" stroke="#cf3f4a" stroke-width="1"/><circle cx="7.3" cy="6.8" r="4" fill="#f79a9a" opacity="0.6"/><path d="M5.2 5.2 L10.8 10.8 M10.8 5.2 L5.2 10.8" stroke="#fff" stroke-width="1.7"/></svg>
<svg style="position:absolute;left:399.5px;top:639.6px;" width="6" height="6" viewBox="0 0 6 6"><path d="M0 0 H5 L0 5Z" fill="#1f8a3a"/></svg>
<svg style="position:absolute;left:490.5px;top:639.6px;" width="6" height="6" viewBox="0 0 6 6"><path d="M0 0 H5 L0 5Z" fill="#1f8a3a"/></svg>
<span id="t142" style="position:absolute;left:35.00px;top:674.43px;font:700 13px/14.94px 'Liberation Sans', sans-serif;color:#111;white-space:nowrap;transform:scaleX(1.0272);transform-origin:left 0;">2,01</span>
<span id="t143" style="position:absolute;left:84.40px;top:674.43px;font:700 13px/14.94px 'Liberation Sans', sans-serif;color:#111;white-space:nowrap;transform:scaleX(0.9909);transform-origin:left 0;">Tecnisches Konzept</span>
<span id="t144" style="position:absolute;left:445.30px;top:674.43px;font:700 13px/14.94px 'Liberation Sans', sans-serif;color:#111;white-space:nowrap;transform:translateX(-50%) scaleX(1.0393);transform-origin:center 0;">23.06.15</span>
<span id="t145" style="position:absolute;left:526.60px;top:674.43px;font:700 13px/14.94px 'Liberation Sans', sans-serif;color:#111;white-space:nowrap;transform:translateX(-50%) scaleX(1.0630);transform-origin:center 0;">10 D</span>
<span id="t146" style="position:absolute;left:601.50px;top:674.43px;font:700 13px/14.94px 'Liberation Sans', sans-serif;color:#111;white-space:nowrap;transform:translateX(-50%) scaleX(1.0472);transform-origin:center 0;">06.07.15</span>
<svg style="position:absolute;left:705.8px;top:672.5px;" width="16" height="16" viewBox="0 0 16 16"><circle cx="8" cy="8" r="7.3" fill="#f27478" stroke="#cf3f4a" stroke-width="1"/><circle cx="7.3" cy="6.8" r="4" fill="#f79a9a" opacity="0.6"/><path d="M5.2 5.2 L10.8 10.8 M10.8 5.2 L5.2 10.8" stroke="#fff" stroke-width="1.7"/></svg>
<svg style="position:absolute;left:399.5px;top:666.9px;" width="6" height="6" viewBox="0 0 6 6"><path d="M0 0 H5 L0 5Z" fill="#1f8a3a"/></svg>
<span id="t147" style="position:absolute;left:35.00px;top:701.73px;font:700 13px/14.94px 'Liberation Sans', sans-serif;color:#111;white-space:nowrap;transform:scaleX(1.0272);transform-origin:left 0;">2,02</span>
<span id="t148" style="position:absolute;left:84.40px;top:701.73px;font:700 13px/14.94px 'Liberation Sans', sans-serif;color:#111;white-space:nowrap;transform:scaleX(0.9713);transform-origin:left 0;">Design</span>
<span id="t149" style="position:absolute;left:445.30px;top:701.73px;font:700 13px/14.94px 'Liberation Sans', sans-serif;color:#111;white-space:nowrap;transform:translateX(-50%) scaleX(1.0393);transform-origin:center 0;">06.07.15</span>
<span id="t150" style="position:absolute;left:526.60px;top:701.73px;font:700 13px/14.94px 'Liberation Sans', sans-serif;color:#111;white-space:nowrap;transform:translateX(-50%) scaleX(1.0675);transform-origin:center 0;">9 D</span>
<span id="t151" style="position:absolute;left:601.50px;top:701.73px;font:700 13px/14.94px 'Liberation Sans', sans-serif;color:#111;white-space:nowrap;transform:translateX(-50%) scaleX(1.0472);transform-origin:center 0;">16.07.15</span>
<svg style="position:absolute;left:705.8px;top:699.8px;" width="16" height="16" viewBox="0 0 16 16"><circle cx="8" cy="8" r="7.3" fill="#f27478" stroke="#cf3f4a" stroke-width="1"/><circle cx="7.3" cy="6.8" r="4" fill="#f79a9a" opacity="0.6"/><path d="M5.2 5.2 L10.8 10.8 M10.8 5.2 L5.2 10.8" stroke="#fff" stroke-width="1.7"/></svg>
<svg style="position:absolute;left:399.5px;top:694.2px;" width="6" height="6" viewBox="0 0 6 6"><path d="M0 0 H5 L0 5Z" fill="#1f8a3a"/></svg>
<span id="t152" style="position:absolute;left:35.00px;top:729.03px;font:700 13px/14.94px 'Liberation Sans', sans-serif;color:#111;white-space:nowrap;transform:scaleX(1.0272);transform-origin:left 0;">2,03</span>
<span id="t153" style="position:absolute;left:84.40px;top:729.03px;font:700 13px/14.94px 'Liberation Sans', sans-serif;color:#111;white-space:nowrap;transform:scaleX(0.9825);transform-origin:left 0;">FMEA</span>
<span id="t154" style="position:absolute;left:445.30px;top:729.03px;font:700 13px/14.94px 'Liberation Sans', sans-serif;color:#111;white-space:nowrap;transform:translateX(-50%) scaleX(1.0393);transform-origin:center 0;">06.07.15</span>
<span id="t155" style="position:absolute;left:526.60px;top:729.03px;font:700 13px/14.94px 'Liberation Sans', sans-serif;color:#111;white-space:nowrap;transform:translateX(-50%) scaleX(1.0675);transform-origin:center 0;">2 D</span>
<span id="t156" style="position:absolute;left:601.50px;top:729.03px;font:700 13px/14.94px 'Liberation Sans', sans-serif;color:#111;white-space:nowrap;transform:translateX(-50%) scaleX(1.0472);transform-origin:center 0;">07.07.15</span>
<svg style="position:absolute;left:705.8px;top:727.1px;" width="16" height="16" viewBox="0 0 16 16"><circle cx="8" cy="8" r="7.3" fill="#f27478" stroke="#cf3f4a" stroke-width="1"/><circle cx="7.3" cy="6.8" r="4" fill="#f79a9a" opacity="0.6"/><path d="M5.2 5.2 L10.8 10.8 M10.8 5.2 L5.2 10.8" stroke="#fff" stroke-width="1.7"/></svg>
<svg style="position:absolute;left:399.5px;top:721.5px;" width="6" height="6" viewBox="0 0 6 6"><path d="M0 0 H5 L0 5Z" fill="#1f8a3a"/></svg>
<span id="t157" style="position:absolute;left:35.00px;top:756.33px;font:700 13px/14.94px 'Liberation Sans', sans-serif;color:#111;white-space:nowrap;transform:scaleX(1.0272);transform-origin:left 0;">2,04</span>
<span id="t158" style="position:absolute;left:84.40px;top:756.33px;font:700 13px/14.94px 'Liberation Sans', sans-serif;color:#111;white-space:nowrap;transform:scaleX(1.0337);transform-origin:left 0;">Konzeptabnahme</span>
<span id="t159" style="position:absolute;left:445.30px;top:756.33px;font:700 13px/14.94px 'Liberation Sans', sans-serif;color:#111;white-space:nowrap;transform:translateX(-50%) scaleX(1.0393);transform-origin:center 0;">21.07.15</span>
<span id="t160" style="position:absolute;left:526.00px;top:756.33px;font:700 13px/14.94px 'Liberation Sans', sans-serif;color:#e00000;white-space:nowrap;transform:translateX(-50%) scaleX(1.1527);transform-origin:center 0;">M</span>
<svg style="position:absolute;left:705.8px;top:754.4px;" width="16" height="16" viewBox="0 0 16 16"><circle cx="8" cy="8" r="7.3" fill="#5ccd74" stroke="#2f9448" stroke-width="1"/><circle cx="7.3" cy="6.5" r="4" fill="#7ee39a" opacity="0.6"/><path d="M4.6 8.3 L7 10.6 L11.6 5.6" fill="none" stroke="#f0fff0" stroke-width="1.8"/></svg>
<svg style="position:absolute;left:399.5px;top:748.8px;" width="6" height="6" viewBox="0 0 6 6"><path d="M0 0 H5 L0 5Z" fill="#1f8a3a"/></svg>
<div style="position:absolute;left:32.3px;top:804.2px;width:692.7px;height:23.9px;background:#d9d9d9;"></div>
<div style="position:absolute;left:726.1px;top:804.2px;width:25.55px;height:23.9px;background:#d9d9d9;"></div>
<div style="position:absolute;left:763.27px;top:804.2px;width:25.55px;height:23.9px;background:#d9d9d9;"></div>
<div style="position:absolute;left:800.44px;top:804.2px;width:25.55px;height:23.9px;background:#d9d9d9;"></div>
<div style="position:absolute;left:837.61px;top:804.2px;width:25.55px;height:23.9px;background:#d9d9d9;"></div>
<div style="position:absolute;left:874.78px;top:804.2px;width:25.55px;height:23.9px;background:#d9d9d9;"></div>
<div style="position:absolute;left:911.95px;top:804.2px;width:25.55px;height:23.9px;background:#d9d9d9;"></div>
<div style="position:absolute;left:949.12px;top:804.2px;width:25.55px;height:23.9px;background:#d9d9d9;"></div>
<div style="position:absolute;left:986.29px;top:804.2px;width:25.55px;height:23.9px;background:#d9d9d9;"></div>
<div style="position:absolute;left:1023.46px;top:804.2px;width:25.55px;height:23.9px;background:#d9d9d9;"></div>
<div style="position:absolute;left:1060.63px;top:804.2px;width:25.55px;height:23.9px;background:#d9d9d9;"></div>
<div style="position:absolute;left:1097.8px;top:804.2px;width:25.55px;height:23.9px;background:#d9d9d9;"></div>
<div style="position:absolute;left:1134.97px;top:804.2px;width:25.55px;height:23.9px;background:#d9d9d9;"></div>
<div style="position:absolute;left:1172.14px;top:804.2px;width:25.55px;height:23.9px;background:#d9d9d9;"></div>
<div style="position:absolute;left:1209.31px;top:804.2px;width:25.55px;height:23.9px;background:#d9d9d9;"></div>
<div style="position:absolute;left:1246.48px;top:804.2px;width:25.55px;height:23.9px;background:#d9d9d9;"></div>
<div style="position:absolute;left:1283.65px;top:804.2px;width:25.55px;height:23.9px;background:#d9d9d9;"></div>
<div style="position:absolute;left:1320.82px;top:804.2px;width:25.55px;height:23.9px;background:#d9d9d9;"></div>
<div style="position:absolute;left:1357.99px;top:804.2px;width:25.55px;height:23.9px;background:#d9d9d9;"></div>
<div style="position:absolute;left:1395.16px;top:804.2px;width:25.55px;height:23.9px;background:#d9d9d9;"></div>
<div style="position:absolute;left:1432.33px;top:804.2px;width:25.55px;height:23.9px;background:#d9d9d9;"></div>
<div style="position:absolute;left:1469.5px;top:804.2px;width:25.55px;height:23.9px;background:#d9d9d9;"></div>
<div style="position:absolute;left:1506.67px;top:804.2px;width:25.55px;height:23.9px;background:#d9d9d9;"></div>
<div style="position:absolute;left:1543.84px;top:804.2px;width:25.55px;height:23.9px;background:#d9d9d9;"></div>
<div style="position:absolute;left:1581.01px;top:804.2px;width:25.55px;height:23.9px;background:#d9d9d9;"></div>
<div style="position:absolute;left:1618.18px;top:804.2px;width:25.55px;height:23.9px;background:#d9d9d9;"></div>
<div style="position:absolute;left:1655.35px;top:804.2px;width:25.55px;height:23.9px;background:#d9d9d9;"></div>
<div style="position:absolute;left:1692.52px;top:804.2px;width:25.55px;height:23.9px;background:#d9d9d9;"></div>
<span id="t161" style="position:absolute;left:35.00px;top:810.93px;font:700 13px/14.94px 'Liberation Sans', sans-serif;color:#111;white-space:nowrap;transform:scaleX(1.0144);transform-origin:left 0;">3,</span>
<span id="t162" style="position:absolute;left:84.40px;top:810.93px;font:700 13px/14.94px 'Liberation Sans', sans-serif;color:#111;white-space:nowrap;transform:scaleX(1.0453);transform-origin:left 0;">Implementierung</span>
<span id="t163" style="position:absolute;left:445.30px;top:810.93px;font:700 13px/14.94px 'Liberation Sans', sans-serif;color:#111;white-space:nowrap;transform:translateX(-50%) scaleX(1.0393);transform-origin:center 0;">26.07.15</span>
<span id="t164" style="position:absolute;left:526.60px;top:810.93px;font:700 13px/14.94px 'Liberation Sans', sans-serif;color:#111;white-space:nowrap;transform:translateX(-50%) scaleX(1.0630);transform-origin:center 0;">19 D</span>
<span id="t165" style="position:absolute;left:601.50px;top:810.93px;font:700 13px/14.94px 'Liberation Sans', sans-serif;color:#111;white-space:nowrap;transform:translateX(-50%) scaleX(1.0472);transform-origin:center 0;">19.08.15</span>
<svg style="position:absolute;left:705.8px;top:809.0px;" width="16" height="16" viewBox="0 0 16 16"><circle cx="8" cy="8" r="7.3" fill="#5ccd74" stroke="#2f9448" stroke-width="1"/><circle cx="7.3" cy="6.5" r="4" fill="#7ee39a" opacity="0.6"/><path d="M4.6 8.3 L7 10.6 L11.6 5.6" fill="none" stroke="#f0fff0" stroke-width="1.8"/></svg>
<svg style="position:absolute;left:399.5px;top:803.4px;" width="6" height="6" viewBox="0 0 6 6"><path d="M0 0 H5 L0 5Z" fill="#1f8a3a"/></svg>
<svg style="position:absolute;left:490.5px;top:803.4px;" width="6" height="6" viewBox="0 0 6 6"><path d="M0 0 H5 L0 5Z" fill="#1f8a3a"/></svg>
<span id="t166" style="position:absolute;left:35.00px;top:838.23px;font:700 13px/14.94px 'Liberation Sans', sans-serif;color:#111;white-space:nowrap;transform:scaleX(1.0272);transform-origin:left 0;">3,01</span>
<span id="t167" style="position:absolute;left:84.40px;top:838.23px;font:700 13px/14.94px 'Liberation Sans', sans-serif;color:#111;white-space:nowrap;transform:scaleX(1.0291);transform-origin:left 0;">Bau Prototyp</span>
<span id="t168" style="position:absolute;left:445.30px;top:838.23px;font:700 13px/14.94px 'Liberation Sans', sans-serif;color:#111;white-space:nowrap;transform:translateX(-50%) scaleX(1.0393);transform-origin:center 0;">26.07.15</span>
<span id="t169" style="position:absolute;left:526.60px;top:838.23px;font:700 13px/14.94px 'Liberation Sans', sans-serif;color:#111;white-space:nowrap;transform:translateX(-50%) scaleX(1.0630);transform-origin:center 0;">10 D</span>
<span id="t170" style="position:absolute;left:601.50px;top:838.23px;font:700 13px/14.94px 'Liberation Sans', sans-serif;color:#111;white-space:nowrap;transform:translateX(-50%) scaleX(1.0472);transform-origin:center 0;">06.08.15</span>
<svg style="position:absolute;left:705.8px;top:836.3px;" width="16" height="16" viewBox="0 0 16 16"><circle cx="8" cy="8" r="7.3" fill="#5ccd74" stroke="#2f9448" stroke-width="1"/><circle cx="7.3" cy="6.5" r="4" fill="#7ee39a" opacity="0.6"/><path d="M4.6 8.3 L7 10.6 L11.6 5.6" fill="none" stroke="#f0fff0" stroke-width="1.8"/></svg>
<svg style="position:absolute;left:399.5px;top:830.7px;" width="6" height="6" viewBox="0 0 6 6"><path d="M0 0 H5 L0 5Z" fill="#1f8a3a"/></svg>
<span id="t171" style="position:absolute;left:35.00px;top:865.53px;font:700 13px/14.94px 'Liberation Sans', sans-serif;color:#111;white-space:nowrap;transform:scaleX(1.0272);transform-origin:left 0;">3,02</span>
<span id="t172" style="position:absolute;left:84.40px;top:865.53px;font:700 13px/14.94px 'Liberation Sans', sans-serif;color:#111;white-space:nowrap;transform:scaleX(1.0477);transform-origin:left 0;">test Prototyp</span>
<span id="t173" style="position:absolute;left:445.30px;top:865.53px;font:700 13px/14.94px 'Liberation Sans', sans-serif;color:#111;white-space:nowrap;transform:translateX(-50%) scaleX(1.0393);transform-origin:center 0;">06.08.15</span>
<span id="t174" style="position:absolute;left:526.60px;top:865.53px;font:700 13px/14.94px 'Liberation Sans', sans-serif;color:#111;white-space:nowrap;transform:translateX(-50%) scaleX(1.0630);transform-origin:center 0;">10 D</span>
<span id="t175" style="position:absolute;left:601.50px;top:865.53px;font:700 13px/14.94px 'Liberation Sans', sans-serif;color:#111;white-space:nowrap;transform:translateX(-50%) scaleX(1.0472);transform-origin:center 0;">19.08.15</span>
<svg style="position:absolute;left:705.8px;top:863.6px;" width="16" height="16" viewBox="0 0 16 16"><circle cx="8" cy="8" r="7.3" fill="#5ccd74" stroke="#2f9448" stroke-width="1"/><circle cx="7.3" cy="6.5" r="4" fill="#7ee39a" opacity="0.6"/><path d="M4.6 8.3 L7 10.6 L11.6 5.6" fill="none" stroke="#f0fff0" stroke-width="1.8"/></svg>
<svg style="position:absolute;left:399.5px;top:858.0px;" width="6" height="6" viewBox="0 0 6 6"><path d="M0 0 H5 L0 5Z" fill="#1f8a3a"/></svg>
<div style="position:absolute;left:81px;top:692.8px;width:256px;height:28.6px;background:transparent;border:2px solid #3f9563;box-sizing:border-box;"></div>
<div style="position:absolute;left:334.5px;top:719px;width:3.0px;height:3px;background:#3f9563;"></div>
<div style="position:absolute;left:354.5px;top:695px;width:1.0px;height:25px;background:#f2f2f2;"></div>
<svg style="position:absolute;left:342.5px;top:705.5px;" width="8" height="6" viewBox="0 0 8 6"><path d="M1.7999999999999998 1.9 L6.2 1.9 L4 4.1 Z" fill="#777"/></svg>
<div style="position:absolute;left:890.21px;top:557.2px;width:4.91px;height:25.2px;background:#ffe400;"></div>
<div style="position:absolute;left:890.21px;top:585.8px;width:4.91px;height:23.9px;background:#ffe400;"></div>
<div style="position:absolute;left:890.21px;top:613.1px;width:4.91px;height:23.9px;background:#ffe400;"></div>
<div style="position:absolute;left:890.21px;top:640.4px;width:4.91px;height:23.9px;background:#ffe400;"></div>
<div style="position:absolute;left:890.21px;top:667.7px;width:4.91px;height:23.9px;background:#ffe400;"></div>
<div style="position:absolute;left:890.21px;top:695.0px;width:4.91px;height:23.9px;background:#ffe400;"></div>
<div style="position:absolute;left:890.21px;top:722.3px;width:4.91px;height:23.9px;background:#ffe400;"></div>
<div style="position:absolute;left:890.21px;top:749.6px;width:4.91px;height:23.9px;background:#ffe400;"></div>
<div style="position:absolute;left:890.21px;top:776.9px;width:4.91px;height:23.9px;background:#ffe400;"></div>
<div style="position:absolute;left:890.21px;top:804.2px;width:4.91px;height:23.9px;background:#ffe400;"></div>
<div style="position:absolute;left:890.21px;top:831.5px;width:4.91px;height:23.9px;background:#ffe400;"></div>
<div style="position:absolute;left:890.21px;top:858.8px;width:4.91px;height:22.2px;background:#ffe400;"></div>
<div style="position:absolute;left:730.91px;top:585.8px;width:5.31px;height:23.9px;background:#f00000;"></div>
<div style="position:absolute;left:805.25px;top:640.4px;width:153.99px;height:23.9px;background:#4f8a2b;"></div>
<div style="position:absolute;left:805.25px;top:667.7px;width:74.34px;height:23.9px;background:#a6f500;"></div>
<div style="position:absolute;left:874.28px;top:695.0px;width:58.41px;height:23.9px;background:#a6f500;"></div>
<div style="position:absolute;left:874.28px;top:722.3px;width:10.62px;height:23.9px;background:#a6f500;"></div>
<div style="position:absolute;left:953.93px;top:749.6px;width:5.31px;height:23.9px;background:#f00000;"></div>
<div style="position:absolute;left:980.48px;top:804.2px;width:132.75px;height:23.9px;background:#4f8a2b;"></div>
<div style="position:absolute;left:980.48px;top:831.5px;width:63.72px;height:23.9px;background:#a6f500;"></div>
<div style="position:absolute;left:1038.89px;top:858.8px;width:74.34px;height:22.2px;background:#a6f500;"></div>
<div style="position:absolute;left:1725px;top:195px;width:19px;height:686.5px;background:#fff;"></div>
<div style="position:absolute;left:1724.3px;top:195px;width:1.0px;height:686.5px;background:#e8e8e8;"></div>
<svg style="position:absolute;left:1729px;top:199px;" width="10" height="8" viewBox="0 0 10 8"><path d="M1 6.5 L5 1.5 L9 6.5Z" fill="#666"/></svg>
<div style="position:absolute;left:1726.4px;top:213.5px;width:17.6px;height:200.0px;background:#fff;border:1px solid #d0d0d0;border-right:none;box-sizing:border-box;"></div>
<svg style="position:absolute;left:1729px;top:869px;" width="10" height="8" viewBox="0 0 10 8"><path d="M1 1.5 L5 6.5 L9 1.5Z" fill="#666"/></svg>
<div style="position:absolute;left:3px;top:881px;width:1722px;height:1px;background:#dadada;"></div>
<svg style="position:absolute;left:20px;top:886px;" width="8" height="12" viewBox="0 0 8 12"><path d="M6 2 L2 6 L6 10Z" fill="#ddd"/></svg>
<svg style="position:absolute;left:46px;top:886px;" width="8" height="12" viewBox="0 0 8 12"><path d="M2 2 L6 6 L2 10Z" fill="#ddd"/></svg>
<div style="position:absolute;left:89.5px;top:884px;width:1.0px;height:20px;background:#eee;"></div>
<span id="t176" style="position:absolute;left:103.00px;top:885.05px;font:400 14.5px/16.66px 'Liberation Sans', sans-serif;color:#444;white-space:nowrap;transform:scaleX(1.0123);transform-origin:left 0;">Einführung</span>
<div style="position:absolute;left:187.5px;top:884px;width:1.0px;height:20px;background:#eee;"></div>
<span id="t177" style="position:absolute;left:200.00px;top:885.05px;font:400 14.5px/16.66px 'Liberation Sans', sans-serif;color:#666;white-space:nowrap;transform:scaleX(1.0230);transform-origin:left 0;">Farbgenerator</span>
<div style="position:absolute;left:306.5px;top:884px;width:1.0px;height:20px;background:#eee;"></div>
<span id="t178" style="position:absolute;left:320.00px;top:885.05px;font:400 14.5px/16.66px 'Liberation Sans', sans-serif;color:#666;white-space:nowrap;transform:scaleX(1.0217);transform-origin:left 0;">Stammdaten</span>
<div style="position:absolute;left:419px;top:881.5px;width:126px;height:22.0px;background:#a6f200;"></div>
<span id="t179" style="position:absolute;left:430.00px;top:885.05px;font:400 14.5px/16.66px 'Liberation Sans', sans-serif;color:#222;white-space:nowrap;transform:scaleX(1.0223);transform-origin:left 0;">Projektplan_4M</span>
<div style="position:absolute;left:550px;top:881.5px;width:125px;height:22.0px;background:#a6f200;"></div>
<span id="t180" style="position:absolute;left:560.00px;top:885.05px;font:400 14.5px/16.66px 'Liberation Sans', sans-serif;color:#222;white-space:nowrap;transform:scaleX(1.0223);transform-origin:left 0;">Projektplan_9M</span>
<span id="t181" style="position:absolute;left:687.00px;top:885.05px;font:700 14.5px/16.66px 'Liberation Sans', sans-serif;color:#217346;white-space:nowrap;transform:scaleX(1.0456);transform-origin:left 0;">Projektplan_12M</span>
<div style="position:absolute;left:678px;top:902.5px;width:139px;height:1.5px;background:#217346;"></div>
<div style="position:absolute;left:819.9px;top:881.5px;width:134.0px;height:22.0px;background:#a6f200;"></div>
<span id="t182" style="position:absolute;left:831.00px;top:885.05px;font:400 14.5px/16.66px 'Liberation Sans', sans-serif;color:#222;white-space:nowrap;transform:scaleX(1.0291);transform-origin:left 0;">Projektplan_24M</span>
<svg style="position:absolute;left:985px;top:884px;" width="18" height="18" viewBox="0 0 18 18"><circle cx="9" cy="9" r="7.5" fill="none" stroke="#888" stroke-width="1"/><path d="M9 5 V13 M5 9 H13" stroke="#666" stroke-width="1.2"/></svg>
<div style="position:absolute;left:1356.5px;top:887px;width:1.0px;height:1px;background:#bbb;"></div>
<div style="position:absolute;left:1356.5px;top:891px;width:1.0px;height:1px;background:#bbb;"></div>
<div style="position:absolute;left:1356.5px;top:895px;width:1.0px;height:1px;background:#bbb;"></div>
<svg style="position:absolute;left:1376px;top:887px;" width="10" height="12" viewBox="0 0 10 12"><path d="M7 2 L2 6 L7 10Z" fill="#555"/></svg>
<div style="position:absolute;left:1390px;top:884px;width:20px;height:19px;background:#fff;border:1px solid #d8d8d8;box-sizing:border-box;"></div>
<svg style="position:absolute;left:1710px;top:887px;" width="10" height="12" viewBox="0 0 10 12"><path d="M3 2 L8 6 L3 10Z" fill="#555"/></svg>
<div style="position:absolute;left:3px;top:906.5px;width:1741px;height:21.5px;background:#127a3f;"></div>
<span id="t183" style="position:absolute;left:5.50px;top:913.19px;font:400 10px/11.49px 'Liberation Sans', sans-serif;color:#c9f5da;white-space:nowrap;transform:scaleX(1.1643);transform-origin:left 0;">Markieren Sie den Zielbereich, und drücken Sie die Eingabetaste.</span>
<div style="position:absolute;left:1450px;top:906.5px;width:34px;height:21.5px;background:#0c6a35;"></div>
<svg style="position:absolute;left:1460px;top:911px;" width="17" height="17" viewBox="0 0 17 17"><rect x="0.5" y="0.5" width="15" height="15" fill="none" stroke="#aef0c8" stroke-width="1.2"/><path d="M5.5 0.5V15.5M10.5 0.5V15.5M0.5 5.5H15.5M0.5 10.5H15.5" stroke="#aef0c8" stroke-width="1.1"/></svg>
<svg style="position:absolute;left:1494px;top:911px;" width="17" height="17" viewBox="0 0 17 17"><rect x="1" y="0.5" width="14.5" height="15" fill="none" stroke="#aef0c8" stroke-width="1.2"/><rect x="3.5" y="3" width="9.5" height="10" fill="none" stroke="#aef0c8" stroke-width="1"/><path d="M6 10.5H10.5" stroke="#e8fff0" stroke-width="1.3"/><path d="M6 5.5H10.5M6 7.5H10.5" stroke="#6cc894" stroke-width="0.8"/></svg>
<svg style="position:absolute;left:1528px;top:911px;" width="17" height="17" viewBox="0 0 17 17"><rect x="0.8" y="0.8" width="14.5" height="14.5" fill="none" stroke="#aef0c8" stroke-width="1.2"/><rect x="0.5" y="0.5" width="10.5" height="8" fill="#fff"/><path d="M5.5 0.5V9" stroke="#127a3f" stroke-width="1"/><path d="M2 12.5H14" stroke="#5fbf88" stroke-width="1.5"/></svg>
<div style="position:absolute;left:1558px;top:918px;width:8px;height:2px;background:#f0fff4;"></div>
<div style="position:absolute;left:1570px;top:918.5px;width:114px;height:1.5px;background:#b8e8cc;"></div>
<div style="position:absolute;left:1624.5px;top:913px;width:5.0px;height:13px;background:#fff;"></div>
<div style="position:absolute;left:1688px;top:918px;width:10px;height:2px;background:#f0fff4;"></div>
<div style="position:absolute;left:1692px;top:914px;width:2px;height:10px;background:#f0fff4;"></div>
<span id="t184" style="position:absolute;left:1710.00px;top:912.39px;font:400 12.5px/14.36px 'Liberation Sans', sans-serif;color:#fff;white-space:nowrap;transform:scaleX(0.9692);transform-origin:left 0;">100%</span>
<div style="position:absolute;left:0px;top:0px;width:1747px;height:3px;background:#86e20a;"></div>
<div style="position:absolute;left:0px;top:928px;width:1747px;height:3px;background:#86e20a;"></div>
<div style="position:absolute;left:0px;top:0px;width:3px;height:931px;background:#86e20a;"></div>
<div style="position:absolute;left:1744px;top:0px;width:3px;height:931px;background:#86e20a;"></div>
</body></html>
